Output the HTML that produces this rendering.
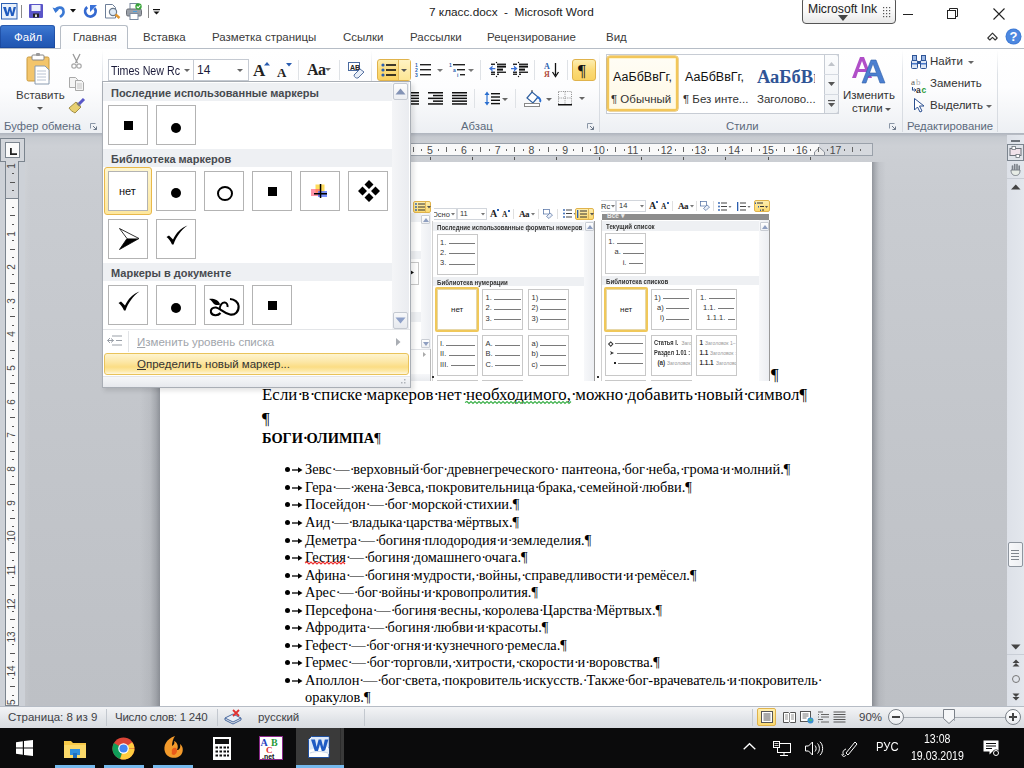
<!DOCTYPE html>
<html><head><meta charset="utf-8">
<style>
*{box-sizing:border-box;margin:0;padding:0}
html,body{width:1024px;height:768px;overflow:hidden;background:#fff;font-family:"Liberation Sans",sans-serif;font-size:12px;color:#1e1e1e}
.a{position:absolute}
.t{position:absolute;white-space:pre;line-height:1}
svg{position:absolute;overflow:visible}
</style></head><body>

<!-- ===== TITLE BAR ===== -->
<div class="a" style="left:0;top:0;width:1024px;height:48px;background:#fff"></div>
<!-- word icon -->
<svg style="left:1px;top:3px" width="17" height="17" viewBox="0 0 17 17">
<rect x="0.5" y="0.5" width="15.5" height="15.5" fill="#e8f0fb" stroke="#2b5fb3"/>
<path d="M2 4 h3 l1.3 6 l1.5-6 h2 l1.5 6 l1.3-6 h2.4 l-2.5 9 h-2.3 l-1.4-5.5 l-1.4 5.5 h-2.3z" fill="#1f5bbf"/>
</svg>
<div class="a" style="left:21px;top:5px;width:1px;height:13px;background:#8a8a8a"></div>
<!-- save -->
<svg style="left:29px;top:4px" width="15" height="15" viewBox="0 0 15 15">
<rect x="0" y="0" width="14" height="14" rx="1" fill="#5a55c8"/>
<rect x="2.5" y="1" width="9" height="6" fill="#eef1fb"/>
<rect x="4" y="9.5" width="6" height="4" fill="#222"/>
<rect x="6" y="10.5" width="2" height="2.5" fill="#ddd"/>
</svg>
<!-- undo -->
<svg style="left:52px;top:4px" width="14" height="14" viewBox="0 0 14 14">
<path d="M3.5 7 C4 3 11 2 11.5 7 C12 10 9.5 12 8 13" fill="none" stroke="#3a78d4" stroke-width="2.6"/>
<path d="M0.5 3.5 L3.5 9 L7 5.5z" fill="#3a78d4"/>
</svg>
<svg style="left:70px;top:9px" width="6" height="4" viewBox="0 0 6 4"><path d="M0 0h6l-3 3.5z" fill="#111"/></svg>
<!-- redo -->
<svg style="left:83px;top:4px" width="15" height="15" viewBox="0 0 15 15"><path d="M4.2 3.2 A5.2 5.2 0 1 0 11.5 4.2" fill="none" stroke="#3469d0" stroke-width="2.8"/><path d="M7 1 L14 1 L7 8z" fill="#3a72d8"/></svg>
<!-- print preview -->
<svg style="left:105px;top:4px" width="16" height="15" viewBox="0 0 16 15">
<path d="M0.5 0.5 h7 l3 3 v10.5 h-10z" fill="#fff" stroke="#6d7f99"/>
<circle cx="8" cy="8" r="3.6" fill="#dfeaf5" stroke="#6b7a8c" stroke-width="1.2"/>
<path d="M10.5 10.5 l4 3.5" stroke="#e0952e" stroke-width="2.4"/>
</svg>
<!-- printer -->
<svg style="left:126px;top:3px" width="17" height="17" viewBox="0 0 17 17">
<rect x="4" y="0.5" width="8" height="6" fill="#fff" stroke="#7a8aa0"/>
<rect x="0.5" y="6" width="15" height="7" rx="1.5" fill="#9aa0a8" stroke="#6c7078"/>
<rect x="4" y="10.5" width="8" height="6" fill="#fff" stroke="#7a8aa0"/>
<rect x="7" y="8" width="4" height="1" fill="#4aa0e0"/>
<circle cx="12.5" cy="3.5" r="3.2" fill="#3aa53a"/>
<path d="M10.8 3.5 l1.3 1.3 l2.2-2.4" stroke="#fff" stroke-width="1.1" fill="none"/>
</svg>
<div class="a" style="left:148px;top:5px;width:1px;height:13px;background:#8a8a8a"></div>
<svg style="left:153px;top:9px" width="8" height="6" viewBox="0 0 8 6"><rect x="0" y="0" width="7" height="1.2" fill="#111"/><path d="M0.5 2.5h6l-3 3z" fill="#111"/></svg>

<div class="t" style="left:429px;top:7px;font-size:11.8px;color:#222">7 класс.docx  -  Microsoft Word</div>

<!-- Microsoft Ink -->
<div class="a" style="left:802px;top:-3px;width:94px;height:27px;border:1px solid #555;border-radius:4px;background:linear-gradient(#fff,#fafafa 50%,#e8e8e8)"></div>
<div class="t" style="left:808px;top:3px;font-size:12.2px;color:#222">Microsoft Ink</div>
<svg style="left:838px;top:15px" width="10" height="6" viewBox="0 0 10 6"><path d="M0 0h10l-5 6z" fill="#444"/></svg>
<svg style="left:883px;top:7px" width="9" height="11" viewBox="0 0 9 11" fill="#555">
<rect x="0" y="0" width="1.2" height="1.2"/><rect x="3" y="0" width="1.2" height="1.2"/><rect x="6" y="0" width="1.2" height="1.2"/>
<rect x="0" y="3" width="1.2" height="1.2"/><rect x="3" y="3" width="1.2" height="1.2"/><rect x="6" y="3" width="1.2" height="1.2"/>
<rect x="0" y="6" width="1.2" height="1.2"/><rect x="3" y="6" width="1.2" height="1.2"/><rect x="6" y="6" width="1.2" height="1.2"/>
<rect x="0" y="9" width="1.2" height="1.2"/><rect x="3" y="9" width="1.2" height="1.2"/><rect x="6" y="9" width="1.2" height="1.2"/>
</svg>
<!-- window controls -->
<div class="a" style="left:903px;top:14px;width:10px;height:1px;background:#222"></div>
<svg style="left:947px;top:8px" width="12" height="12" viewBox="0 0 12 12"><rect x="0.5" y="2.5" width="8" height="8" fill="none" stroke="#222"/><path d="M2.5 2.5 v-2 h8 v8 h-2" fill="none" stroke="#222"/></svg>
<svg style="left:993px;top:8px" width="12" height="12" viewBox="0 0 12 12"><path d="M0.5 0.5 L11.5 11.5 M11.5 0.5 L0.5 11.5" stroke="#222" stroke-width="1.1"/></svg>

<!-- ===== TABS ===== -->
<div class="a" style="left:0;top:25px;width:55px;height:23px;background:linear-gradient(#3f7bd3,#2b63c0 50%,#1f55b0);border-radius:3px 3px 0 0;box-shadow:inset 0 0 0 1px rgba(20,60,140,0.5)"></div>
<div class="t" style="left:14px;top:32px;color:#fff;font-size:11.5px">Файл</div>
<div class="a" style="left:0;top:48px;width:1024px;height:1px;background:#b6bdc6"></div>
<div class="a" style="left:60px;top:25px;width:68px;height:24px;background:linear-gradient(#fff,#fbfcfd);border:1px solid #b6bdc6;border-bottom:none;border-radius:3px 3px 0 0"></div>
<div class="t" style="left:73px;top:32px;font-size:11.5px;color:#3b3b3b">Главная</div>
<div class="t" style="left:143px;top:32px;font-size:11.5px;color:#3b3b3b">Вставка</div>
<div class="t" style="left:212px;top:32px;font-size:11.5px;color:#3b3b3b">Разметка страницы</div>
<div class="t" style="left:343px;top:32px;font-size:11.5px;color:#3b3b3b">Ссылки</div>
<div class="t" style="left:410px;top:32px;font-size:11.5px;color:#3b3b3b">Рассылки</div>
<div class="t" style="left:487px;top:32px;font-size:11.5px;color:#3b3b3b">Рецензирование</div>
<div class="t" style="left:606px;top:32px;font-size:11.5px;color:#3b3b3b">Вид</div>
<svg style="left:987px;top:32px" width="11" height="9" viewBox="0 0 11 9"><path d="M0.8 6 L5.5 1.2 L10.2 6 L8.2 8 L5.5 5.3 L2.8 8z" fill="#fff" stroke="#333" stroke-width="1.1" stroke-linejoin="round"/></svg>
<svg style="left:1005px;top:28px" width="17" height="17" viewBox="0 0 17 17"><circle cx="8.5" cy="8.5" r="8" fill="#3f7bd6"/><circle cx="8.5" cy="8.5" r="7" fill="#4d88e0"/><text x="8.5" y="13.2" font-family="Liberation Sans" font-weight="bold" font-size="13" fill="#fff" text-anchor="middle">?</text></svg>

<!-- ===== RIBBON ===== -->
<div class="a" style="left:0;top:49px;width:1024px;height:85px;background:linear-gradient(#fff 0%,#fdfdfe 45%,#f1f3f6 85%,#eceff3 100%)"></div>
<div class="a" style="left:0;top:133px;width:1024px;height:1px;background:#b1b7c0"></div>
<!-- group separators -->
<div class="a" style="left:102px;top:50px;width:1px;height:82px;background:linear-gradient(#fff,#dde1e6 30%,#d6dae0)"></div>
<div class="a" style="left:371px;top:50px;width:1px;height:82px;background:linear-gradient(#fff,#dde1e6 30%,#d6dae0)"></div>
<div class="a" style="left:599px;top:50px;width:1px;height:82px;background:linear-gradient(#fff,#dde1e6 30%,#d6dae0)"></div>
<div class="a" style="left:902px;top:50px;width:1px;height:82px;background:linear-gradient(#fff,#dde1e6 30%,#d6dae0)"></div>
<div class="a" style="left:997px;top:50px;width:1px;height:82px;background:linear-gradient(#fff,#dde1e6 30%,#d6dae0)"></div>
<!-- group labels -->
<div class="t" style="left:4px;top:121px;font-size:11.3px;color:#5c6a7c">Буфер обмена</div>
<svg style="left:90px;top:123px" width="7" height="7" viewBox="0 0 7 7"><path d="M0.5 0.5h5" stroke="#8a96a6"/><path d="M0.5 0.5v5" stroke="#8a96a6"/><path d="M3 3l3.5 3.5M6.5 3.5v3h-3" stroke="#6b7788" fill="none"/></svg>
<div class="t" style="left:461px;top:121px;font-size:11.3px;color:#5c6a7c">Абзац</div>
<svg style="left:587px;top:123px" width="7" height="7" viewBox="0 0 7 7"><path d="M0.5 0.5h5" stroke="#8a96a6"/><path d="M0.5 0.5v5" stroke="#8a96a6"/><path d="M3 3l3.5 3.5M6.5 3.5v3h-3" stroke="#6b7788" fill="none"/></svg>
<div class="t" style="left:726px;top:121px;font-size:11.3px;color:#5c6a7c">Стили</div>
<svg style="left:889px;top:123px" width="7" height="7" viewBox="0 0 7 7"><path d="M0.5 0.5h5" stroke="#8a96a6"/><path d="M0.5 0.5v5" stroke="#8a96a6"/><path d="M3 3l3.5 3.5M6.5 3.5v3h-3" stroke="#6b7788" fill="none"/></svg>
<div class="t" style="left:907px;top:121px;font-size:11.3px;color:#5c6a7c">Редактирование</div>

<!-- clipboard -->
<svg style="left:26px;top:53px" width="28" height="32" viewBox="0 0 28 32">
<rect x="1" y="4" width="22" height="24" rx="1.5" fill="#f3c56b" stroke="#c99a3f"/>
<rect x="6" y="2" width="12" height="5" rx="1" fill="#fff" stroke="#888"/>
<rect x="10" y="0" width="4" height="3" rx="1" fill="#999"/>
<path d="M9 13 h10 l4 4 v14 h-14z" fill="#fff" stroke="#8a9bb0"/>
<path d="M11 18h9M11 21h9M11 24h9M11 27h9" stroke="#b9c4d3"/>
</svg>
<div class="t" style="left:16px;top:90px;font-size:11.5px;color:#3b3b3b">Вставить</div>
<svg style="left:37px;top:107px" width="6" height="4" viewBox="0 0 6 4"><path d="M0 0h6l-3 3z" fill="#555"/></svg>
<svg style="left:71px;top:54px" width="11" height="15" viewBox="0 0 11 15"><path d="M2 0 L6.5 9 M9 0 L4.5 9" stroke="#9a9a9a" stroke-width="1.3"/><circle cx="3" cy="12" r="2.2" fill="none" stroke="#a8a8a8" stroke-width="1.2"/><circle cx="8" cy="12" r="2.2" fill="none" stroke="#a8a8a8" stroke-width="1.2"/></svg>
<svg style="left:69px;top:77px" width="16" height="14" viewBox="0 0 16 14"><path d="M0.5 0.5h6l2 2v8h-8z" fill="#f4f4f4" stroke="#a9a9a9"/><path d="M6.5 3.5h6l2 2v8h-8z" fill="#f4f4f4" stroke="#a9a9a9"/><path d="M8 7h5M8 9h5M8 11h5" stroke="#c4c4c4"/></svg>
<svg style="left:69px;top:98px" width="17" height="16" viewBox="0 0 17 16"><path d="M10 6 L15 1" stroke="#5856c8" stroke-width="3"/><path d="M7 4 L12 9 L6 15 C4 14 1 12 0 10z" fill="#e8d070" stroke="#8e7a30" stroke-width="0.8"/><path d="M8 5 l3 3" stroke="#777" stroke-width="2"/></svg>

<!-- font group top row -->
<div class="a" style="left:108px;top:59px;width:86px;height:22px;background:#fff;border:1px solid #c5cad2"></div>
<div class="a" style="left:110px;top:60px;width:70px;height:20px;overflow:hidden"><div class="t" style="left:1px;top:4.5px;font-size:12px;color:#1b1b3a;transform:scaleX(0.89);transform-origin:0 0">Times New Rc</div></div>
<svg style="left:184px;top:69px" width="6" height="4" viewBox="0 0 6 4"><path d="M0 0h6l-3 3z" fill="#666"/></svg>
<div class="a" style="left:193px;top:59px;width:56px;height:22px;background:#fff;border:1px solid #c5cad2"></div>
<div class="t" style="left:197px;top:64px;font-size:12px;color:#1b1b3a">14</div>
<svg style="left:237px;top:69px" width="6" height="4" viewBox="0 0 6 4"><path d="M0 0h6l-3 3z" fill="#666"/></svg>
<div class="t" style="left:253px;top:62px;font-family:'Liberation Serif';font-weight:bold;font-size:17px;color:#222">A</div>
<svg style="left:264px;top:62px" width="6" height="4" viewBox="0 0 6 4"><path d="M0 3.5h6l-3-3.5z" fill="#2a5db0"/></svg>
<div class="t" style="left:277px;top:66px;font-family:'Liberation Serif';font-weight:bold;font-size:13px;color:#222">A</div>
<svg style="left:286px;top:63px" width="6" height="4" viewBox="0 0 6 4"><path d="M0 0h6l-3 3.5z" fill="#2a5db0"/></svg>
<div class="a" style="left:298px;top:60px;width:1px;height:20px;background:#dfe2e6"></div>
<div class="t" style="left:307px;top:62px;font-family:'Liberation Serif';font-weight:bold;font-size:16px;color:#222;letter-spacing:-0.5px">Aa</div>
<svg style="left:325px;top:68px" width="6" height="4" viewBox="0 0 6 4"><path d="M0 0h6l-3 3z" fill="#666"/></svg>
<div class="a" style="left:339px;top:60px;width:1px;height:20px;background:#dfe2e6"></div>
<svg style="left:348px;top:62px" width="17" height="17" viewBox="0 0 17 17"><rect x="0.5" y="0.5" width="11" height="8" fill="#fff" stroke="#4a6aa0"/><text x="2" y="7.5" font-family="Liberation Sans" font-weight="bold" font-size="7" fill="#222">AB</text><path d="M6 13 L12 7 L16 10 L10 16 C8 16.5 6 15 6 13z" fill="#e8eef8" stroke="#5570a0"/></svg>

<!-- paragraph group -->
<div class="a" style="left:377px;top:59px;width:34px;height:22px;border:1px solid #e0b34c;border-radius:3px;background:linear-gradient(#fdeeb0,#fbdb79 50%,#f9d262)"></div>
<div class="a" style="left:398px;top:60px;width:12px;height:20px;border-left:1px solid #e3b95a;background:linear-gradient(#fff3c3,#fde695)"></div>
<svg style="left:381px;top:63px" width="16" height="14" viewBox="0 0 16 14"><circle cx="2" cy="2" r="1.6" fill="#2b5fb0"/><circle cx="2" cy="7" r="1.6" fill="#2b5fb0"/><circle cx="2" cy="12" r="1.6" fill="#2b5fb0"/><rect x="5" y="1.2" width="10" height="1.6" fill="#111"/><rect x="5" y="6.2" width="10" height="1.6" fill="#111"/><rect x="5" y="11.2" width="10" height="1.6" fill="#111"/></svg>
<svg style="left:401px;top:69px" width="6" height="4" viewBox="0 0 6 4"><path d="M0 0h6l-3 3z" fill="#555"/></svg>
<!-- numbered -->
<svg style="left:415px;top:62px" width="17" height="15" viewBox="0 0 17 15"><text x="0" y="4.5" font-size="5" font-weight="bold" fill="#2b5fb0" font-family="Liberation Sans">1</text><text x="0" y="9.5" font-size="5" font-weight="bold" fill="#2b5fb0" font-family="Liberation Sans">2</text><text x="0" y="14.5" font-size="5" font-weight="bold" fill="#2b5fb0" font-family="Liberation Sans">3</text><rect x="5" y="2" width="11" height="1.4" fill="#222"/><rect x="5" y="7" width="11" height="1.4" fill="#222"/><rect x="5" y="12" width="11" height="1.4" fill="#222"/></svg>
<svg style="left:437px;top:69px" width="6" height="4" viewBox="0 0 6 4"><path d="M0 0h6l-3 3z" fill="#777"/></svg>
<svg style="left:449px;top:62px" width="17" height="15" viewBox="0 0 17 15"><text x="0" y="4.5" font-size="5" font-weight="bold" fill="#2b5fb0" font-family="Liberation Sans">1</text><text x="4" y="9.5" font-size="5" font-weight="bold" fill="#2b5fb0" font-family="Liberation Sans">a</text><text x="8" y="14.5" font-size="5" font-weight="bold" fill="#2b5fb0" font-family="Liberation Sans">i</text><rect x="4" y="2" width="12" height="1.4" fill="#222"/><rect x="8" y="7" width="8" height="1.4" fill="#222"/><rect x="11" y="12" width="5" height="1.4" fill="#222"/></svg>
<svg style="left:468px;top:69px" width="6" height="4" viewBox="0 0 6 4"><path d="M0 0h6l-3 3z" fill="#777"/></svg>
<div class="a" style="left:480px;top:60px;width:1px;height:20px;background:#dfe2e6"></div>
<svg style="left:489px;top:61px" width="18" height="17" viewBox="0 0 18 17"><circle cx="7.5" cy="1.5" r="0.7" fill="#111"/><circle cx="7.5" cy="15.5" r="0.7" fill="#111"/><rect x="2" y="2.6" width="4" height="1.3" fill="#111"/><rect x="2" y="10.6" width="4" height="1.3" fill="#111"/><rect x="2" y="12.6" width="4" height="1.3" fill="#111"/><rect x="8" y="2.6" width="9" height="1.3" fill="#111"/><rect x="8" y="4.6" width="9" height="2" fill="#111"/><rect x="8" y="7.6" width="6" height="2" fill="#111"/><rect x="8" y="10.6" width="9" height="1.3" fill="#111"/><rect x="8" y="12.6" width="2" height="1.3" fill="#111"/><path d="M0 7.6 L4 4.3 L3.2 7 H6.3 V8.2 H3.2 L4 10.9z" fill="#3a70d4"/></svg>
<svg style="left:511px;top:61px" width="18" height="17" viewBox="0 0 18 17"><circle cx="7.5" cy="1.5" r="0.7" fill="#111"/><circle cx="7.5" cy="15.5" r="0.7" fill="#111"/><rect x="2" y="2.6" width="4" height="1.3" fill="#111"/><rect x="2" y="10.6" width="4" height="1.3" fill="#111"/><rect x="2" y="12.6" width="4" height="1.3" fill="#111"/><rect x="8" y="2.6" width="9" height="1.3" fill="#111"/><rect x="8" y="4.6" width="9" height="2" fill="#111"/><rect x="8" y="7.6" width="6" height="2" fill="#111"/><rect x="8" y="10.6" width="9" height="1.3" fill="#111"/><rect x="8" y="12.6" width="2" height="1.3" fill="#111"/><path d="M6.5 7.6 L2.5 4.3 L3.3 7 H0 V8.2 H3.3 L2.5 10.9z" fill="#3a70d4"/></svg>
<div class="a" style="left:534px;top:60px;width:1px;height:20px;background:#dfe2e6"></div>
<svg style="left:544px;top:62px" width="15" height="16" viewBox="0 0 15 16"><text x="0" y="7" font-size="8" font-weight="bold" fill="#2b5fb0" font-family="Liberation Serif">A</text><text x="0" y="15" font-size="8" font-weight="bold" fill="#b04a3a" font-family="Liberation Serif">Я</text><path d="M11.5 1 v12" stroke="#111" stroke-width="1.3"/><path d="M8.5 10 L11.5 14.5 L14.5 10" fill="none" stroke="#111" stroke-width="1.3"/></svg>
<div class="a" style="left:567px;top:60px;width:1px;height:20px;background:#dfe2e6"></div>
<div class="a" style="left:572px;top:59px;width:24px;height:22px;border:1px solid #e0b34c;border-radius:3px;background:linear-gradient(#fdeeb0,#fbdb79 50%,#f9d262)"></div>
<div class="t" style="left:578px;top:62px;font-family:'Liberation Serif';font-size:17px;color:#111">¶</div>
<!-- row2 -->
<svg style="left:405px;top:92px" width="15" height="13" viewBox="0 0 15 13"><rect x="2" y="0.0" width="12" height="1.5" fill="#111"/><rect x="2" y="2.8" width="12" height="1.5" fill="#111"/><rect x="2" y="5.6" width="12" height="1.5" fill="#111"/><rect x="2" y="8.399999999999999" width="12" height="1.5" fill="#111"/><rect x="2" y="11.2" width="12" height="1.5" fill="#111"/></svg>
<svg style="left:428px;top:92px" width="15" height="13" viewBox="0 0 15 13"><rect x="0" y="0" width="15" height="1.5" fill="#111"/><rect x="5" y="2.8" width="10" height="1.5" fill="#111"/><rect x="0" y="5.6" width="15" height="1.5" fill="#111"/><rect x="5" y="8.4" width="10" height="1.5" fill="#111"/><rect x="0" y="11.2" width="15" height="1.5" fill="#111"/></svg>
<svg style="left:452px;top:92px" width="15" height="13" viewBox="0 0 15 13"><rect x="0" y="0.0" width="15" height="1.5" fill="#111"/><rect x="0" y="2.8" width="15" height="1.5" fill="#111"/><rect x="0" y="5.6" width="15" height="1.5" fill="#111"/><rect x="0" y="8.399999999999999" width="15" height="1.5" fill="#111"/><rect x="0" y="11.2" width="15" height="1.5" fill="#111"/></svg>
<div class="a" style="left:474px;top:89px;width:1px;height:19px;background:#dfe2e6"></div>
<svg style="left:484px;top:91px" width="24" height="15" viewBox="0 0 24 15"><path d="M3 0.5 L0.5 4 h5z M3 14.5 L0.5 11 h5z" fill="#2b6fd0"/><rect x="2.4" y="3" width="1.2" height="9" fill="#2b6fd0"/><rect x="7" y="2.0" width="9" height="1.4" fill="#111"/><rect x="7" y="5.3" width="9" height="1.4" fill="#111"/><rect x="7" y="8.6" width="9" height="1.4" fill="#111"/><rect x="7" y="11.899999999999999" width="9" height="1.4" fill="#111"/><path d="M18 7h6l-3 3z" fill="#666"/></svg>
<div class="a" style="left:515px;top:89px;width:1px;height:19px;background:#dfe2e6"></div>
<svg style="left:524px;top:90px" width="28" height="17" viewBox="0 0 28 17"><path d="M3 8 L8 2 L14 7 L9 13z" fill="#fff" stroke="#2f5f9f" stroke-width="1.2"/><path d="M8 2 V0" stroke="#333"/><path d="M13 7 C16 8 17 10 16 12" stroke="#2b6fd0" stroke-width="2" fill="none"/><rect x="0.5" y="13.5" width="15" height="3" fill="#fff" stroke="#888"/><path d="M22 8h6l-3 3z" fill="#666"/></svg>
<svg style="left:558px;top:91px" width="28" height="15" viewBox="0 0 28 15"><path d="M0.5 0.5h13v13h-13zM7 0.5v13M0.5 7h13" fill="none" stroke="#8a8a8a" stroke-width="1" stroke-dasharray="1,1.2"/><rect x="0" y="13" width="14" height="1.5" fill="#111"/><path d="M21 6h6l-3 3z" fill="#666"/></svg>

<!-- styles group -->
<div class="a" style="left:606px;top:54px;width:233px;height:60px;background:#fff;border:1px solid #c7ccd4"></div>
<div class="a" style="left:607px;top:56px;width:71px;height:55px;border:2px solid #f2c65a;border-radius:3px;box-shadow:inset 0 0 0 1px #fff3c9, 0 0 0 0.5px #d9a93a;background:linear-gradient(#fffdf5,#fff9e6)"></div>
<div class="t" style="left:613px;top:70.5px;font-size:12.5px;color:#111">АаБбВвГг,</div>
<div class="t" style="left:611px;top:93.5px;font-size:11.5px;color:#333">¶ Обычный</div>
<div class="t" style="left:685px;top:70.5px;font-size:12.5px;color:#111">АаБбВвГг,</div>
<div class="t" style="left:683px;top:93.5px;font-size:11.5px;color:#333">¶ Без инте...</div>
<div class="a" style="left:755px;top:62px;width:60px;height:26px;overflow:hidden"><div class="t" style="left:2px;top:5.5px;font-family:'Liberation Serif';font-weight:bold;font-size:18.5px;color:#2f5496">АаБбВв</div></div>
<div class="t" style="left:757px;top:93.5px;font-size:11.5px;color:#333">Заголово...</div>
<div class="a" style="left:824px;top:54px;width:15px;height:60px;background:linear-gradient(#fbfcfd,#eef1f4);border:1px solid #c7ccd4;border-radius:0 3px 3px 0"></div>
<div class="a" style="left:824px;top:74px;width:15px;height:1px;background:#d5dae1"></div>
<div class="a" style="left:824px;top:94px;width:15px;height:1px;background:#d5dae1"></div>
<svg style="left:828px;top:62px" width="7" height="4" viewBox="0 0 7 4"><path d="M0 4h7l-3.5-4z" fill="#c0c4ca"/></svg>
<svg style="left:828px;top:82px" width="7" height="4" viewBox="0 0 7 4"><path d="M0 0h7l-3.5 4z" fill="#555"/></svg>
<svg style="left:828px;top:100px" width="7" height="7" viewBox="0 0 7 7"><rect x="0" y="0" width="7" height="1.2" fill="#555"/><path d="M0 3h7l-3.5 4z" fill="#555"/></svg>
<!-- change styles -->
<svg style="left:852px;top:56px" width="34" height="28" viewBox="0 0 34 28"><path d="M0 22 L8 1 L12 1 L20 22 h-4 l-2-6 h-8 l-2 6z M7 13 h6 l-3-8z" fill="#b04fc8"/><path d="M10 27 L19 4 L24 4 L33 27 h-5 l-2.5-7 h-9 l-2.5 7z M17.5 17 h7 l-3.5-9.5z" fill="#4b7fd0" stroke="#2f5fa8" stroke-width="0.6"/></svg>
<div class="t" style="left:843px;top:90px;font-size:11.5px;color:#333">Изменить</div>
<div class="t" style="left:852px;top:103px;font-size:11.5px;color:#333">стили</div>
<svg style="left:885px;top:108px" width="6" height="4" viewBox="0 0 6 4"><path d="M0 0h6l-3 3z" fill="#555"/></svg>

<!-- editing group -->
<svg style="left:911px;top:54px" width="16" height="15" viewBox="0 0 16 15"><rect x="0.5" y="6.5" width="6" height="8" rx="1" fill="#dfe8f6" stroke="#2f5597"/><rect x="9.5" y="6.5" width="6" height="8" rx="1" fill="#dfe8f6" stroke="#2f5597"/><rect x="1.5" y="1.5" width="4" height="5" fill="#9db9e6" stroke="#2f5597"/><rect x="10.5" y="1.5" width="4" height="5" fill="#9db9e6" stroke="#2f5597"/><rect x="6" y="7" width="4" height="3" fill="#2f5597"/><rect x="1" y="9" width="5" height="1.5" fill="#4a78c8"/><rect x="10" y="9" width="5" height="1.5" fill="#4a78c8"/></svg>
<div class="t" style="left:930px;top:56px;font-size:11.5px;color:#333">Найти</div>
<svg style="left:968px;top:61px" width="6" height="4" viewBox="0 0 6 4"><path d="M0 0h6l-3 3z" fill="#666"/></svg>
<svg style="left:911px;top:78px" width="18" height="15" viewBox="0 0 18 15"><text x="0" y="7" font-family="Liberation Serif" font-size="9" fill="#555">a</text><text x="5" y="7" font-family="Liberation Serif" font-size="9" fill="#aaa">b</text><text x="5" y="14.5" font-family="Liberation Sans" font-weight="bold" font-size="8.5" fill="#333">a</text><text x="10.5" y="14.5" font-family="Liberation Sans" font-weight="bold" font-size="8.5" fill="#2a9a3a">c</text><path d="M1.5 9 v3 h2.5" stroke="#2b4f90" stroke-width="1.1" fill="none"/><path d="M3.5 10.5 l1.5 1.5 l-1.5 1.5" stroke="#2b4f90" stroke-width="1" fill="none"/></svg>
<div class="t" style="left:930px;top:78px;font-size:11.5px;color:#333">Заменить</div>
<svg style="left:914px;top:98px" width="11" height="15" viewBox="0 0 11 15"><path d="M0.5 0.5 L0.5 12 L3.5 9 L6 14 L8 13 L5.5 8 L10 8z" fill="#fff" stroke="#2b4f90"/></svg>
<div class="t" style="left:930px;top:100px;font-size:11.5px;color:#333">Выделить</div>
<svg style="left:986px;top:105px" width="6" height="4" viewBox="0 0 6 4"><path d="M0 0h6l-3 3z" fill="#666"/></svg>

<!-- ===== RULER BAR / DOC BG ===== -->
<div class="a" style="left:0;top:134px;width:1024px;height:572px;background:linear-gradient(#cdd0d5 0px,#c9ccd1 60px,#c3c6cb 300px,#bdc0c5 572px)"></div>
<div class="a" style="left:0;top:134px;width:1024px;height:28px;background:linear-gradient(#b4b9c1 0px,#c6cad0 3px,#cdd0d5 12px,#cbced3 100%)"></div>
<div class="a" style="left:0;top:162px;width:25px;height:544px;background:#cdd1d7"></div>
<div class="a" style="left:25px;top:162px;width:135px;height:544px;background:linear-gradient(90deg,rgba(255,255,255,0.08) 0px,rgba(0,0,0,0) 6px,rgba(0,0,0,0) 115px,rgba(40,45,55,0.06) 125px,rgba(40,45,55,0.2) 131px,rgba(40,45,55,0.35) 135px)"></div>
<div class="a" style="left:872px;top:162px;width:135px;height:544px;background:linear-gradient(90deg,rgba(40,45,55,0.35) 0px,rgba(40,45,55,0.2) 3px,rgba(40,45,55,0.06) 7px,rgba(0,0,0,0) 14px)"></div>
<!-- horizontal ruler -->
<div class="a" style="left:160px;top:143px;width:713px;height:13px;background:#d6d9de;border:1px solid #9aa1aa"></div>
<div class="a" style="left:261px;top:144px;width:558px;height:11px;background:#f9f9f9"></div>
<svg style="left:814px;top:147px" width="11" height="9" viewBox="0 0 11 9"><path d="M0.5 8.5 V5 L5.5 0.5 L10.5 5 V8.5z" fill="#ececec" stroke="#8a9099"/></svg>
<div class="a" style="left:412.6px;top:147px;width:1px;height:5px;background:#666"></div>
<div class="a" style="left:421.0px;top:149px;width:1px;height:1.5px;background:#666"></div>
<div class="t" style="left:420.0px;width:20px;text-align:center;top:145px;font-size:10.5px;color:#4a4a4a">5</div>
<div class="a" style="left:437.9px;top:149px;width:1px;height:1.5px;background:#666"></div>
<div class="a" style="left:446.4px;top:147px;width:1px;height:5px;background:#666"></div>
<div class="a" style="left:454.9px;top:149px;width:1px;height:1.5px;background:#666"></div>
<div class="t" style="left:453.8px;width:20px;text-align:center;top:145px;font-size:10.5px;color:#4a4a4a">6</div>
<div class="a" style="left:471.8px;top:149px;width:1px;height:1.5px;background:#666"></div>
<div class="a" style="left:480.2px;top:147px;width:1px;height:5px;background:#666"></div>
<div class="a" style="left:488.6px;top:149px;width:1px;height:1.5px;background:#666"></div>
<div class="t" style="left:487.6px;width:20px;text-align:center;top:145px;font-size:10.5px;color:#4a4a4a">7</div>
<div class="a" style="left:505.5px;top:149px;width:1px;height:1.5px;background:#666"></div>
<div class="a" style="left:514.0px;top:147px;width:1px;height:5px;background:#666"></div>
<div class="a" style="left:522.5px;top:149px;width:1px;height:1.5px;background:#666"></div>
<div class="t" style="left:521.4px;width:20px;text-align:center;top:145px;font-size:10.5px;color:#4a4a4a">8</div>
<div class="a" style="left:539.3px;top:149px;width:1px;height:1.5px;background:#666"></div>
<div class="a" style="left:547.8px;top:147px;width:1px;height:5px;background:#666"></div>
<div class="a" style="left:556.2px;top:149px;width:1px;height:1.5px;background:#666"></div>
<div class="t" style="left:555.2px;width:20px;text-align:center;top:145px;font-size:10.5px;color:#4a4a4a">9</div>
<div class="a" style="left:573.1px;top:149px;width:1px;height:1.5px;background:#666"></div>
<div class="a" style="left:581.6px;top:147px;width:1px;height:5px;background:#666"></div>
<div class="a" style="left:590.0px;top:149px;width:1px;height:1.5px;background:#666"></div>
<div class="t" style="left:589.0px;width:20px;text-align:center;top:145px;font-size:10.5px;color:#4a4a4a">10</div>
<div class="a" style="left:607.0px;top:149px;width:1px;height:1.5px;background:#666"></div>
<div class="a" style="left:615.4px;top:147px;width:1px;height:5px;background:#666"></div>
<div class="a" style="left:623.8px;top:149px;width:1px;height:1.5px;background:#666"></div>
<div class="t" style="left:622.8px;width:20px;text-align:center;top:145px;font-size:10.5px;color:#4a4a4a">11</div>
<div class="a" style="left:640.8px;top:149px;width:1px;height:1.5px;background:#666"></div>
<div class="a" style="left:649.2px;top:147px;width:1px;height:5px;background:#666"></div>
<div class="a" style="left:657.6px;top:149px;width:1px;height:1.5px;background:#666"></div>
<div class="t" style="left:656.6px;width:20px;text-align:center;top:145px;font-size:10.5px;color:#4a4a4a">12</div>
<div class="a" style="left:674.5px;top:149px;width:1px;height:1.5px;background:#666"></div>
<div class="a" style="left:683.0px;top:147px;width:1px;height:5px;background:#666"></div>
<div class="a" style="left:691.5px;top:149px;width:1px;height:1.5px;background:#666"></div>
<div class="t" style="left:690.4px;width:20px;text-align:center;top:145px;font-size:10.5px;color:#4a4a4a">13</div>
<div class="a" style="left:708.3px;top:149px;width:1px;height:1.5px;background:#666"></div>
<div class="a" style="left:716.8px;top:147px;width:1px;height:5px;background:#666"></div>
<div class="a" style="left:725.2px;top:149px;width:1px;height:1.5px;background:#666"></div>
<div class="t" style="left:724.2px;width:20px;text-align:center;top:145px;font-size:10.5px;color:#4a4a4a">14</div>
<div class="a" style="left:742.1px;top:149px;width:1px;height:1.5px;background:#666"></div>
<div class="a" style="left:750.6px;top:147px;width:1px;height:5px;background:#666"></div>
<div class="a" style="left:759.0px;top:149px;width:1px;height:1.5px;background:#666"></div>
<div class="t" style="left:758.0px;width:20px;text-align:center;top:145px;font-size:10.5px;color:#4a4a4a">15</div>
<div class="a" style="left:775.9px;top:149px;width:1px;height:1.5px;background:#666"></div>
<div class="a" style="left:784.4px;top:147px;width:1px;height:5px;background:#666"></div>
<div class="a" style="left:792.8px;top:149px;width:1px;height:1.5px;background:#666"></div>
<div class="t" style="left:791.8px;width:20px;text-align:center;top:145px;font-size:10.5px;color:#4a4a4a">16</div>
<div class="a" style="left:809.8px;top:149px;width:1px;height:1.5px;background:#666"></div>
<div class="a" style="left:818.2px;top:147px;width:1px;height:5px;background:#666"></div>
<div class="a" style="left:826.6px;top:149px;width:1px;height:1.5px;background:#666"></div>
<div class="t" style="left:825.6px;width:20px;text-align:center;top:145px;font-size:10.5px;color:#4a4a4a">17</div>
<div class="a" style="left:843.5px;top:149px;width:1px;height:1.5px;background:#666"></div>
<div class="a" style="left:852.0px;top:147px;width:1px;height:5px;background:#666"></div>
<div class="a" style="left:860.4px;top:149px;width:1px;height:1.5px;background:#666"></div>
<div class="a" style="left:429.5px;top:157px;width:1px;height:3px;background:#555"></div>
<div class="a" style="left:471.8px;top:157px;width:1px;height:3px;background:#555"></div>
<div class="a" style="left:514.0px;top:157px;width:1px;height:3px;background:#555"></div>
<div class="a" style="left:556.2px;top:157px;width:1px;height:3px;background:#555"></div>
<div class="a" style="left:598.5px;top:157px;width:1px;height:3px;background:#555"></div>
<div class="a" style="left:640.8px;top:157px;width:1px;height:3px;background:#555"></div>
<div class="a" style="left:683.0px;top:157px;width:1px;height:3px;background:#555"></div>
<div class="a" style="left:725.2px;top:157px;width:1px;height:3px;background:#555"></div>
<div class="a" style="left:767.5px;top:157px;width:1px;height:3px;background:#555"></div>
<div class="a" style="left:809.8px;top:157px;width:1px;height:3px;background:#555"></div>
<!-- tab selector -->
<div class="a" style="left:0;top:138px;width:25px;height:24px;background:#d3d6db;border:1px solid #7b848e"></div>
<div class="a" style="left:5px;top:142px;width:15px;height:16px;background:#fafafa;border:1px solid #7b848e"></div>
<svg style="left:10px;top:148px" width="7" height="7" viewBox="0 0 7 7"><path d="M0 0h1.8v5.2h5.2v1.8h-7z" fill="#222"/></svg>
<!-- vertical ruler -->
<div class="a" style="left:5px;top:161px;width:14px;height:545px;background:#f9f9f9;border:1px solid #7b848e;border-top:none"></div>
<div class="a" style="left:6px;top:161px;width:12px;height:38px;background:#d3d6db;border-bottom:1px solid #7b848e"></div>
<div class="t" style="left:3px;top:161.2px;width:18px;height:10px;text-align:center;font-size:10px;color:#4a4a4a;transform:rotate(-90deg)">1</div>
<div class="a" style="left:11.5px;top:173.1px;width:2px;height:1px;background:#555"></div>
<div class="a" style="left:10px;top:181.5px;width:5px;height:1px;background:#555"></div>
<div class="a" style="left:11.5px;top:189.9px;width:2px;height:1px;background:#555"></div>
<div class="a" style="left:11.5px;top:206.8px;width:2px;height:1px;background:#555"></div>
<div class="a" style="left:10px;top:215.2px;width:5px;height:1px;background:#555"></div>
<div class="a" style="left:11.5px;top:223.6px;width:2px;height:1px;background:#555"></div>
<div class="t" style="left:3px;top:228.5px;width:18px;height:10px;text-align:center;font-size:10px;color:#4a4a4a;transform:rotate(-90deg)">1</div>
<div class="a" style="left:11.5px;top:240.4px;width:2px;height:1px;background:#555"></div>
<div class="a" style="left:10px;top:248.8px;width:5px;height:1px;background:#555"></div>
<div class="a" style="left:11.5px;top:257.2px;width:2px;height:1px;background:#555"></div>
<div class="t" style="left:3px;top:262.1px;width:18px;height:10px;text-align:center;font-size:10px;color:#4a4a4a;transform:rotate(-90deg)">2</div>
<div class="a" style="left:11.5px;top:274.1px;width:2px;height:1px;background:#555"></div>
<div class="a" style="left:10px;top:282.5px;width:5px;height:1px;background:#555"></div>
<div class="a" style="left:11.5px;top:290.9px;width:2px;height:1px;background:#555"></div>
<div class="t" style="left:3px;top:295.8px;width:18px;height:10px;text-align:center;font-size:10px;color:#4a4a4a;transform:rotate(-90deg)">3</div>
<div class="a" style="left:11.5px;top:307.7px;width:2px;height:1px;background:#555"></div>
<div class="a" style="left:10px;top:316.1px;width:5px;height:1px;background:#555"></div>
<div class="a" style="left:11.5px;top:324.5px;width:2px;height:1px;background:#555"></div>
<div class="t" style="left:3px;top:329.4px;width:18px;height:10px;text-align:center;font-size:10px;color:#4a4a4a;transform:rotate(-90deg)">4</div>
<div class="a" style="left:11.5px;top:341.4px;width:2px;height:1px;background:#555"></div>
<div class="a" style="left:10px;top:349.8px;width:5px;height:1px;background:#555"></div>
<div class="a" style="left:11.5px;top:358.2px;width:2px;height:1px;background:#555"></div>
<div class="t" style="left:3px;top:363.1px;width:18px;height:10px;text-align:center;font-size:10px;color:#4a4a4a;transform:rotate(-90deg)">5</div>
<div class="a" style="left:11.5px;top:375.0px;width:2px;height:1px;background:#555"></div>
<div class="a" style="left:10px;top:383.4px;width:5px;height:1px;background:#555"></div>
<div class="a" style="left:11.5px;top:391.8px;width:2px;height:1px;background:#555"></div>
<div class="t" style="left:3px;top:396.7px;width:18px;height:10px;text-align:center;font-size:10px;color:#4a4a4a;transform:rotate(-90deg)">6</div>
<div class="a" style="left:11.5px;top:408.7px;width:2px;height:1px;background:#555"></div>
<div class="a" style="left:10px;top:417.1px;width:5px;height:1px;background:#555"></div>
<div class="a" style="left:11.5px;top:425.5px;width:2px;height:1px;background:#555"></div>
<div class="t" style="left:3px;top:430.4px;width:18px;height:10px;text-align:center;font-size:10px;color:#4a4a4a;transform:rotate(-90deg)">7</div>
<div class="a" style="left:11.5px;top:442.3px;width:2px;height:1px;background:#555"></div>
<div class="a" style="left:10px;top:450.7px;width:5px;height:1px;background:#555"></div>
<div class="a" style="left:11.5px;top:459.1px;width:2px;height:1px;background:#555"></div>
<div class="t" style="left:3px;top:464.0px;width:18px;height:10px;text-align:center;font-size:10px;color:#4a4a4a;transform:rotate(-90deg)">8</div>
<div class="a" style="left:11.5px;top:476.0px;width:2px;height:1px;background:#555"></div>
<div class="a" style="left:10px;top:484.4px;width:5px;height:1px;background:#555"></div>
<div class="a" style="left:11.5px;top:492.8px;width:2px;height:1px;background:#555"></div>
<div class="t" style="left:3px;top:497.7px;width:18px;height:10px;text-align:center;font-size:10px;color:#4a4a4a;transform:rotate(-90deg)">9</div>
<div class="a" style="left:11.5px;top:509.6px;width:2px;height:1px;background:#555"></div>
<div class="a" style="left:10px;top:518.0px;width:5px;height:1px;background:#555"></div>
<div class="a" style="left:11.5px;top:526.4px;width:2px;height:1px;background:#555"></div>
<div class="t" style="left:3px;top:531.4px;width:18px;height:10px;text-align:center;font-size:10px;color:#4a4a4a;transform:rotate(-90deg)">10</div>
<div class="a" style="left:11.5px;top:543.3px;width:2px;height:1px;background:#555"></div>
<div class="a" style="left:10px;top:551.7px;width:5px;height:1px;background:#555"></div>
<div class="a" style="left:11.5px;top:560.1px;width:2px;height:1px;background:#555"></div>
<div class="t" style="left:3px;top:565.0px;width:18px;height:10px;text-align:center;font-size:10px;color:#4a4a4a;transform:rotate(-90deg)">11</div>
<div class="a" style="left:11.5px;top:576.9px;width:2px;height:1px;background:#555"></div>
<div class="a" style="left:10px;top:585.3px;width:5px;height:1px;background:#555"></div>
<div class="a" style="left:11.5px;top:593.7px;width:2px;height:1px;background:#555"></div>
<div class="t" style="left:3px;top:598.6px;width:18px;height:10px;text-align:center;font-size:10px;color:#4a4a4a;transform:rotate(-90deg)">12</div>
<div class="a" style="left:11.5px;top:610.6px;width:2px;height:1px;background:#555"></div>
<div class="a" style="left:10px;top:619.0px;width:5px;height:1px;background:#555"></div>
<div class="a" style="left:11.5px;top:627.4px;width:2px;height:1px;background:#555"></div>
<div class="t" style="left:3px;top:632.3px;width:18px;height:10px;text-align:center;font-size:10px;color:#4a4a4a;transform:rotate(-90deg)">13</div>
<div class="a" style="left:11.5px;top:644.2px;width:2px;height:1px;background:#555"></div>
<div class="a" style="left:10px;top:652.6px;width:5px;height:1px;background:#555"></div>
<div class="a" style="left:11.5px;top:661.0px;width:2px;height:1px;background:#555"></div>
<div class="t" style="left:3px;top:665.9px;width:18px;height:10px;text-align:center;font-size:10px;color:#4a4a4a;transform:rotate(-90deg)">14</div>
<div class="a" style="left:11.5px;top:677.9px;width:2px;height:1px;background:#555"></div>
<div class="a" style="left:10px;top:686.3px;width:5px;height:1px;background:#555"></div>
<div class="a" style="left:11.5px;top:694.7px;width:2px;height:1px;background:#555"></div>
<div class="t" style="left:3px;top:699.6px;width:18px;height:10px;text-align:center;font-size:10px;color:#4a4a4a;transform:rotate(-90deg)">15</div>

<!-- page -->
<div class="a" style="left:160px;top:162px;width:712px;height:544px;background:#fff"></div>

<!-- embedded image panels -->
<div class="a" style="left:405px;top:213px;width:26px;height:168px;background:#fff;border-right:1px solid #b9b9b9"></div>
<div class="a" style="left:405px;top:213px;width:16px;height:9px;background:#eef0f3"></div>
<div class="a" style="left:421px;top:213px;width:10px;height:136px;background:linear-gradient(90deg,#f7f8fa,#eceef2)"></div>
<div class="a" style="left:421px;top:215px;width:9px;height:9px;border:1px solid #c9cdd4;border-radius:1px;background:linear-gradient(#fff,#eef0f3)"></div><svg style="left:421.5px;top:216.5px" width="8" height="6" viewBox="0 0 8 6"><path d="M1 5h6l-3-4z" fill="#8e9ec0"/></svg>
<div class="a" style="left:421px;top:339px;width:9px;height:9px;border:1px solid #c9cdd4;border-radius:1px;background:linear-gradient(#fff,#eef0f3)"></div><svg style="left:421.5px;top:340.5px" width="8" height="6" viewBox="0 0 8 6"><path d="M1 1h6l-3 4z" fill="#8e9ec0"/></svg>
<div class="a" style="left:405px;top:251px;width:16px;height:8px;background:#eef0f3"></div>
<div class="a" style="left:396px;top:262px;width:23px;height:23px;border:1px solid #c8c8c8;background:#fff"></div>
<svg style="left:410px;top:270px" width="4" height="5" viewBox="0 0 4 5"><path d="M0 0l4 2.5l-4 2.5z" fill="#111"/></svg>
<div class="a" style="left:405px;top:312px;width:16px;height:10px;background:#eef0f3"></div>
<div class="a" style="left:405px;top:349px;width:25px;height:1px;background:#e2e4e8"></div>
<svg style="left:423px;top:352px" width="3" height="5" viewBox="0 0 3 5"><path d="M0 0l3 2.5l-3 2.5z" fill="#aaa"/></svg>
<div class="a" style="left:400px;top:354px;width:9px;height:21px;border:1px solid #e6c050;border-radius:2px;background:linear-gradient(#fff3c8,#fbdf86 60%,#fff6d8)"></div>
<div class="a" style="left:405px;top:374px;width:25px;height:7px;background:linear-gradient(#f6f7f9,#e9ebef)"></div>
<div class="a" style="left:413px;top:201px;width:18px;height:12px;border:1px solid #e0b34c;border-radius:2px;background:linear-gradient(#fdeeb0,#fbd96f)"></div>
<svg style="left:415px;top:203px" width="10" height="8" viewBox="0 0 10 8"><circle cx="1" cy="1" r="0.9" fill="#2b5fb0"/><circle cx="1" cy="4" r="0.9" fill="#2b5fb0"/><circle cx="1" cy="7" r="0.9" fill="#2b5fb0"/><rect x="3" y="0.5" width="7" height="1" fill="#333"/><rect x="3" y="3.5" width="7" height="1" fill="#333"/><rect x="3" y="6.5" width="7" height="1" fill="#333"/></svg>
<div class="a" style="left:425px;top:202px;width:1px;height:10px;background:#e3b95a"></div>
<svg style="left:426.5px;top:206px" width="4" height="3" viewBox="0 0 4 3"><path d="M0 0h4l-2 2.5z" fill="#555"/></svg>
<div class="a" style="left:433px;top:207px;width:162px;height:14px;background:#fff"></div>
<div class="a" style="left:434px;top:208px;width:23px;height:12px;border:1px solid #d2d6dc;border-left:none;background:#fff;overflow:hidden"><div class="t" style="left:-2px;top:2px;font-size:7.5px;color:#333">Осно</div></div>
<svg style="left:451px;top:213px" width="4" height="3" viewBox="0 0 4 3"><path d="M0 0h4l-2 2.5z" fill="#777"/></svg>
<div class="a" style="left:457px;top:208px;width:30px;height:12px;border:1px solid #d2d6dc;background:#fff"></div>
<div class="t" style="left:460px;top:210px;font-size:7.5px;color:#333;">11</div>
<svg style="left:481px;top:213px" width="4" height="3" viewBox="0 0 4 3"><path d="M0 0h4l-2 2.5z" fill="#777"/></svg>
<div class="t" style="left:490px;top:209px;font-size:10px;color:#222;font-weight:bold;font-family:'Liberation Serif';">A</div><div class="a" style="left:497px;top:209px;width:2px;height:1.5px;background:#2b5fb0"></div><div class="t" style="left:502px;top:211px;font-size:7.5px;color:#222;font-weight:bold;font-family:'Liberation Serif';">A</div><div class="a" style="left:508px;top:210px;width:2px;height:1.5px;background:#2b5fb0"></div>
<div class="a" style="left:513px;top:209px;width:1px;height:10px;background:#e0e0e0"></div>
<div class="t" style="left:519px;top:210px;font-size:9px;color:#222;font-weight:bold;font-family:'Liberation Serif';letter-spacing:-0.5px;">Aa</div>
<svg style="left:531px;top:213px" width="4" height="3" viewBox="0 0 4 3"><path d="M0 0h4l-2 2.5z" fill="#777"/></svg>
<div class="a" style="left:538px;top:209px;width:1px;height:10px;background:#e0e0e0"></div>
<svg style="left:543px;top:209px" width="10" height="10" viewBox="0 0 10 10"><rect x="0.5" y="0.5" width="6" height="4.5" fill="#fff" stroke="#4a6aa0" stroke-width="0.7"/><path d="M3.5 7.5 L7 4 L9.5 6 L6 9.5z" fill="#e8eef8" stroke="#5570a0" stroke-width="0.7"/></svg>
<div class="a" style="left:557px;top:209px;width:1px;height:10px;background:#e0e0e0"></div>
<svg style="left:563px;top:209px" width="14" height="9" viewBox="0 0 14 9"><circle cx="1" cy="1" r="0.9" fill="#2b5fb0"/><circle cx="1" cy="4.5" r="0.9" fill="#2b5fb0"/><circle cx="1" cy="8" r="0.9" fill="#2b5fb0"/><rect x="3" y="0.5" width="6" height="1" fill="#444"/><rect x="3" y="4" width="6" height="1" fill="#444"/><rect x="3" y="7.5" width="6" height="1" fill="#444"/><path d="M10.5 4h3l-1.5 2z" fill="#777"/></svg>
<div class="a" style="left:575px;top:208px;width:19px;height:12px;border:1px solid #e0b34c;border-radius:2px;background:linear-gradient(#fdeeb0,#fbd96f)"></div>
<svg style="left:577px;top:210px" width="10" height="8" viewBox="0 0 10 8"><rect x="0" y="0" width="1.3" height="8" fill="#2b5fb0"/><rect x="3" y="0.5" width="7" height="1" fill="#333"/><rect x="3" y="3.5" width="7" height="1" fill="#333"/><rect x="3" y="6.5" width="7" height="1" fill="#333"/></svg>
<div class="a" style="left:588px;top:209px;width:1px;height:10px;background:#e3b95a"></div>
<svg style="left:589.5px;top:213px" width="4" height="3" viewBox="0 0 4 3"><path d="M0 0h4l-2 2.5z" fill="#555"/></svg>
<div class="a" style="left:432px;top:221px;width:163px;height:160px;background:#fff;border-left:1px solid #d0d0d0;border-right:1px solid #9a9a9a"></div>
<div class="a" style="left:433px;top:222px;width:151px;height:9px;background:#eef0f3"></div><div class="t" style="left:437px;top:223.5px;font-size:7.2px;color:#333;font-weight:bold;transform:scaleX(0.85);transform-origin:0 0;">Последние использованные форматы номеров</div>
<div class="a" style="left:584px;top:221px;width:10px;height:160px;background:linear-gradient(90deg,#f7f8fa,#eceef2)"></div>
<div class="a" style="left:585px;top:222px;width:9px;height:9px;border:1px solid #c9cdd4;border-radius:1px;background:linear-gradient(#fff,#eef0f3)"></div><svg style="left:585.5px;top:223.5px" width="8" height="6" viewBox="0 0 8 6"><path d="M1 5h6l-3-4z" fill="#8e9ec0"/></svg>
<div class="a" style="left:436.5px;top:233.5px;width:41px;height:41px;border:1px solid #c8c8c8;background:#fff"></div>
<div class="t" style="left:440.0px;top:238.5px;font-size:7.5px;color:#333;">1.</div><div class="a" style="left:448.5px;top:243.0px;width:26.5px;height:1px;background:#7a7a7a"></div><div class="t" style="left:440.0px;top:248.8px;font-size:7.5px;color:#333;">2.</div><div class="a" style="left:448.5px;top:253.3px;width:26.5px;height:1px;background:#7a7a7a"></div><div class="t" style="left:440.0px;top:259.1px;font-size:7.5px;color:#333;">3.</div><div class="a" style="left:448.5px;top:263.6px;width:26.5px;height:1px;background:#7a7a7a"></div>
<div class="a" style="left:433px;top:277px;width:151px;height:9px;background:#eef0f3"></div><div class="t" style="left:437px;top:278.5px;font-size:7.2px;color:#333;font-weight:bold;transform:scaleX(0.85);transform-origin:0 0;">Библиотека нумерации</div>
<div class="a" style="left:435.0px;top:287.0px;width:44px;height:45px;border:2px solid #f0c85a;border-radius:2px;background:#fff;box-shadow:inset 0 0 0 1px #e6d7a8"></div>
<div class="t" style="left:451px;top:306px;font-size:8px;color:#222;">нет</div>
<div class="a" style="left:482px;top:289px;width:41px;height:41px;border:1px solid #c8c8c8;background:#fff"></div>
<div class="t" style="left:485.5px;top:294.0px;font-size:7.5px;color:#333;">1.</div><div class="a" style="left:494.0px;top:298.5px;width:26.5px;height:1px;background:#7a7a7a"></div><div class="t" style="left:485.5px;top:304.3px;font-size:7.5px;color:#333;">2.</div><div class="a" style="left:494.0px;top:308.8px;width:26.5px;height:1px;background:#7a7a7a"></div><div class="t" style="left:485.5px;top:314.6px;font-size:7.5px;color:#333;">3.</div><div class="a" style="left:494.0px;top:319.1px;width:26.5px;height:1px;background:#7a7a7a"></div>
<div class="a" style="left:528px;top:289px;width:41px;height:41px;border:1px solid #c8c8c8;background:#fff"></div>
<div class="t" style="left:531.5px;top:294.0px;font-size:7.5px;color:#333;">1)</div><div class="a" style="left:540.4px;top:298.5px;width:26.1px;height:1px;background:#7a7a7a"></div><div class="t" style="left:531.5px;top:304.3px;font-size:7.5px;color:#333;">2)</div><div class="a" style="left:540.4px;top:308.8px;width:26.1px;height:1px;background:#7a7a7a"></div><div class="t" style="left:531.5px;top:314.6px;font-size:7.5px;color:#333;">3)</div><div class="a" style="left:540.4px;top:319.1px;width:26.1px;height:1px;background:#7a7a7a"></div>
<div class="a" style="left:436.5px;top:335px;width:41px;height:41px;border:1px solid #c8c8c8;background:#fff"></div>
<div class="t" style="left:440.0px;top:340.0px;font-size:7.5px;color:#333;">I.</div><div class="a" style="left:446.4px;top:344.5px;width:28.6px;height:1px;background:#7a7a7a"></div><div class="t" style="left:440.0px;top:350.3px;font-size:7.5px;color:#333;">II.</div><div class="a" style="left:448.5px;top:354.8px;width:26.5px;height:1px;background:#7a7a7a"></div><div class="t" style="left:440.0px;top:360.6px;font-size:7.5px;color:#333;">III.</div><div class="a" style="left:450.5px;top:365.1px;width:24.5px;height:1px;background:#7a7a7a"></div>
<div class="a" style="left:482px;top:335px;width:41px;height:41px;border:1px solid #c8c8c8;background:#fff"></div>
<div class="t" style="left:485.5px;top:340.0px;font-size:7.5px;color:#333;">A.</div><div class="a" style="left:494.8px;top:344.5px;width:25.7px;height:1px;background:#7a7a7a"></div><div class="t" style="left:485.5px;top:350.3px;font-size:7.5px;color:#333;">B.</div><div class="a" style="left:494.8px;top:354.8px;width:25.7px;height:1px;background:#7a7a7a"></div><div class="t" style="left:485.5px;top:360.6px;font-size:7.5px;color:#333;">C.</div><div class="a" style="left:495.2px;top:365.1px;width:25.3px;height:1px;background:#7a7a7a"></div>
<div class="a" style="left:528px;top:335px;width:41px;height:41px;border:1px solid #c8c8c8;background:#fff"></div>
<div class="t" style="left:531.5px;top:340.0px;font-size:7.5px;color:#333;">a)</div><div class="a" style="left:540.4px;top:344.5px;width:26.1px;height:1px;background:#7a7a7a"></div><div class="t" style="left:531.5px;top:350.3px;font-size:7.5px;color:#333;">b)</div><div class="a" style="left:540.4px;top:354.8px;width:26.1px;height:1px;background:#7a7a7a"></div><div class="t" style="left:531.5px;top:360.6px;font-size:7.5px;color:#333;">c)</div><div class="a" style="left:539.9px;top:365.1px;width:26.6px;height:1px;background:#7a7a7a"></div>
<div class="a" style="left:436.5px;top:380px;width:41px;height:1px;background:#c8c8c8"></div><div class="a" style="left:482px;top:380px;width:41px;height:1px;background:#c8c8c8"></div>
<div class="a" style="left:600px;top:199px;width:170px;height:14px;background:#fff"></div>
<div class="a" style="left:601px;top:200px;width:15px;height:12px;border:1px solid #d2d6dc;border-left:none;background:#fff;overflow:hidden"><div class="t" style="left:0px;top:2px;font-size:7.5px;color:#333">Rc</div></div>
<svg style="left:611px;top:205px" width="4" height="3" viewBox="0 0 4 3"><path d="M0 0h4l-2 2.5z" fill="#777"/></svg>
<div class="a" style="left:616px;top:200px;width:30px;height:12px;border:1px solid #d2d6dc;background:#fff"></div>
<div class="t" style="left:619px;top:202px;font-size:7.5px;color:#333;">14</div>
<svg style="left:640px;top:205px" width="4" height="3" viewBox="0 0 4 3"><path d="M0 0h4l-2 2.5z" fill="#777"/></svg>
<div class="t" style="left:649px;top:201px;font-size:10px;color:#222;font-weight:bold;font-family:'Liberation Serif';">A</div><div class="a" style="left:656px;top:201px;width:2px;height:1.5px;background:#2b5fb0"></div><div class="t" style="left:661px;top:203px;font-size:7.5px;color:#222;font-weight:bold;font-family:'Liberation Serif';">A</div><div class="a" style="left:667px;top:202px;width:2px;height:1.5px;background:#2b5fb0"></div>
<div class="a" style="left:672px;top:201px;width:1px;height:10px;background:#e0e0e0"></div>
<div class="t" style="left:678px;top:202px;font-size:9px;color:#222;font-weight:bold;font-family:'Liberation Serif';letter-spacing:-0.5px;">Aa</div>
<svg style="left:690px;top:205px" width="4" height="3" viewBox="0 0 4 3"><path d="M0 0h4l-2 2.5z" fill="#777"/></svg>
<div class="a" style="left:696px;top:201px;width:1px;height:10px;background:#e0e0e0"></div>
<svg style="left:700px;top:201px" width="10" height="10" viewBox="0 0 10 10"><rect x="0.5" y="0.5" width="6" height="4.5" fill="#fff" stroke="#4a6aa0" stroke-width="0.7"/><path d="M3.5 7.5 L7 4 L9.5 6 L6 9.5z" fill="#e8eef8" stroke="#5570a0" stroke-width="0.7"/></svg>
<div class="a" style="left:713px;top:201px;width:1px;height:10px;background:#e0e0e0"></div>
<svg style="left:718px;top:202px" width="14" height="9" viewBox="0 0 14 9"><circle cx="1" cy="1" r="0.9" fill="#2b5fb0"/><circle cx="1" cy="4.5" r="0.9" fill="#2b5fb0"/><circle cx="1" cy="8" r="0.9" fill="#2b5fb0"/><rect x="3" y="0.5" width="6" height="1" fill="#444"/><rect x="3" y="4" width="6" height="1" fill="#444"/><rect x="3" y="7.5" width="6" height="1" fill="#444"/><path d="M10.5 4h3l-1.5 2z" fill="#777"/></svg>
<svg style="left:737px;top:202px" width="14" height="9" viewBox="0 0 14 9"><rect x="0" y="0" width="1.3" height="9" fill="#2b5fb0"/><rect x="3" y="0.5" width="6" height="1" fill="#444"/><rect x="3" y="4" width="6" height="1" fill="#444"/><rect x="3" y="7.5" width="6" height="1" fill="#444"/><path d="M10.5 4h3l-1.5 2z" fill="#777"/></svg>
<div class="a" style="left:753.5px;top:200px;width:16px;height:12px;border:1px solid #e0b34c;border-radius:2px;background:linear-gradient(#fdeeb0,#fbd96f)"></div>
<svg style="left:755px;top:202px" width="13" height="9" viewBox="0 0 13 9"><rect x="0" y="0.5" width="1" height="1.5" fill="#2b5fb0"/><rect x="2" y="0.5" width="6" height="1" fill="#333"/><rect x="3" y="4" width="1" height="1.5" fill="#2b5fb0"/><rect x="5" y="4" width="4" height="1" fill="#333"/><rect x="5" y="7.5" width="1" height="1.5" fill="#2b5fb0"/><rect x="7" y="7.5" width="2" height="1" fill="#333"/><path d="M10 4h3l-1.5 2z" fill="#555"/></svg>
<div class="a" style="left:602px;top:213.5px;width:167px;height:6.5px;background:#8d8d8d"></div>
<div class="t" style="left:607px;top:213px;font-size:6.5px;color:#e8e8e8;font-weight:bold;">Все ▾</div>
<div class="a" style="left:601px;top:220px;width:169px;height:161px;background:#fff;border-left:1px solid #d0d0d0;border-right:1px solid #9a9a9a"></div>
<div class="a" style="left:602px;top:221px;width:157px;height:10px;background:#eef0f3"></div><div class="t" style="left:606px;top:222.5px;font-size:7.2px;color:#333;font-weight:bold;transform:scaleX(0.85);transform-origin:0 0;">Текущий список</div>
<div class="a" style="left:759px;top:220px;width:10px;height:161px;background:linear-gradient(90deg,#f7f8fa,#eceef2)"></div>
<div class="a" style="left:760px;top:222px;width:9px;height:9px;border:1px solid #c9cdd4;border-radius:1px;background:linear-gradient(#fff,#eef0f3)"></div><svg style="left:760.5px;top:223.5px" width="8" height="6" viewBox="0 0 8 6"><path d="M1 5h6l-3-4z" fill="#8e9ec0"/></svg>
<div class="a" style="left:605px;top:233px;width:41px;height:41px;border:1px solid #c8c8c8;background:#fff"></div>
<div class="t" style="left:608.3px;top:238.0px;font-size:7.5px;color:#333;">1.</div><div class="a" style="left:616.8px;top:242.5px;width:26.7px;height:1px;background:#7a7a7a"></div><div class="t" style="left:614.5px;top:248.3px;font-size:7.5px;color:#333;">a.</div><div class="a" style="left:623.0px;top:252.8px;width:20.5px;height:1px;background:#7a7a7a"></div><div class="t" style="left:622.7px;top:258.6px;font-size:7.5px;color:#333;">i.</div><div class="a" style="left:628.7px;top:263.1px;width:14.8px;height:1px;background:#7a7a7a"></div>
<div class="a" style="left:602px;top:276px;width:157px;height:9px;background:#eef0f3"></div><div class="t" style="left:606px;top:277.5px;font-size:7.2px;color:#333;font-weight:bold;transform:scaleX(0.85);transform-origin:0 0;">Библиотека списков</div>
<div class="a" style="left:603.5px;top:287.0px;width:44px;height:45px;border:2px solid #f0c85a;border-radius:2px;background:#fff;box-shadow:inset 0 0 0 1px #e6d7a8"></div>
<div class="t" style="left:620px;top:306px;font-size:8px;color:#222;">нет</div>
<div class="a" style="left:650.5px;top:288.5px;width:41px;height:41px;border:1px solid #c8c8c8;background:#fff"></div>
<div class="t" style="left:654px;top:293.5px;font-size:7.5px;color:#333;">1)</div><div class="a" style="left:662.9px;top:298.0px;width:26.1px;height:1px;background:#7a7a7a"></div><div class="t" style="left:657px;top:303.8px;font-size:7.5px;color:#333;">a)</div><div class="a" style="left:665.9px;top:308.3px;width:23.1px;height:1px;background:#7a7a7a"></div><div class="t" style="left:660px;top:314.1px;font-size:7.5px;color:#333;">i)</div><div class="a" style="left:666.4px;top:318.6px;width:22.6px;height:1px;background:#7a7a7a"></div>
<div class="a" style="left:696px;top:288.5px;width:41px;height:41px;border:1px solid #c8c8c8;background:#fff"></div>
<div class="t" style="left:700px;top:293.5px;font-size:7.5px;color:#333;">1.</div><div class="a" style="left:708.5px;top:298.0px;width:26.0px;height:1px;background:#7a7a7a"></div><div class="t" style="left:703px;top:303.8px;font-size:7.5px;color:#333;">1.1.</div><div class="a" style="left:717.7px;top:308.3px;width:16.8px;height:1px;background:#7a7a7a"></div><div class="t" style="left:706.5px;top:314.1px;font-size:7.5px;color:#333;">1.1.1.</div><div class="a" style="left:727.5px;top:318.6px;width:7.0px;height:1px;background:#7a7a7a"></div>
<div class="a" style="left:605px;top:334.5px;width:41px;height:41px;border:1px solid #c8c8c8;background:#fff"></div>
<div class="a" style="left:608.5px;top:341.5px;width:3.5px;height:3.5px;border:1px solid #333;transform:rotate(45deg)"></div><div class="a" style="left:615px;top:343px;width:28px;height:1px;background:#7a7a7a"></div>
<svg style="left:610px;top:351px" width="4" height="4" viewBox="0 0 4 4"><path d="M0 0l4 2l-4 2l1-2z" fill="#333"/></svg><div class="a" style="left:617px;top:353px;width:26px;height:1px;background:#7a7a7a"></div>
<div class="a" style="left:614px;top:362px;width:2px;height:2px;background:#222"></div><div class="a" style="left:618px;top:363px;width:25px;height:1px;background:#7a7a7a"></div>
<div class="a" style="left:650.5px;top:334.5px;width:41px;height:41px;border:1px solid #c8c8c8;background:#fff;overflow:hidden"><div class="t" style="left:2.5px;top:4px;font-size:6.3px;color:#333;font-weight:bold;transform:scaleX(0.9);transform-origin:0 0;">Статья I.</div><div class="t" style="left:30px;top:5px;font-size:5px;color:#999;">Заго</div><div class="t" style="left:2.5px;top:14px;font-size:6.3px;color:#333;font-weight:bold;transform:scaleX(0.9);transform-origin:0 0;">Раздел 1.01 :</div><div class="t" style="left:6px;top:24.5px;font-size:6.3px;color:#333;font-weight:bold;">(a)</div><div class="t" style="left:15.5px;top:25.5px;font-size:5px;color:#999;">Заголовок</div></div>
<div class="a" style="left:696px;top:334.5px;width:41px;height:41px;border:1px solid #c8c8c8;background:#fff;overflow:hidden"><div class="t" style="left:2.5px;top:4px;font-size:6.3px;color:#333;font-weight:bold;">1</div><div class="t" style="left:8px;top:5px;font-size:5px;color:#999;">Заголовок 1–</div><div class="t" style="left:2.5px;top:14px;font-size:6.3px;color:#333;font-weight:bold;">1.1</div><div class="t" style="left:13px;top:15px;font-size:5px;color:#999;">Заголовок :</div><div class="t" style="left:2.5px;top:24.5px;font-size:6.3px;color:#333;font-weight:bold;">1.1.1</div><div class="t" style="left:19px;top:25.5px;font-size:5px;color:#999;">Заголовс</div></div>
<div class="a" style="left:605px;top:380px;width:41px;height:1px;background:#c8c8c8"></div><div class="a" style="left:650.5px;top:380px;width:41px;height:1px;background:#c8c8c8"></div>
<div class="t" style="left:771px;top:367px;font-size:16.8px;color:#000;font-family:'Liberation Serif';">¶</div>
<div class="a" style="left:432px;top:376px;width:1.5px;height:1.5px;background:#333"></div><div class="a" style="left:597px;top:376px;width:1.5px;height:1.5px;background:#333"></div>

<!-- doc text -->
<style>.doc{position:absolute;white-space:pre;font-family:"Liberation Serif",serif;color:#000;line-height:1}.doc i{font-style:normal;display:inline-block;width:0.25em;text-align:center;overflow:visible}.doc .pil{font-weight:normal}</style>
<div class="doc" style="left:262px;top:387px;font-size:16.8px;letter-spacing:0.09px">Если<i>·</i>в<i>·</i>списке<i>·</i>маркеров<i>·</i>нет<i>·</i>необходимого,<i>·</i>можно<i>·</i>добавить<i>·</i>новый<i>·</i>символ<b class="pil">¶</b></div>
<div class="doc" style="left:262px;top:411px;font-size:16.8px"><b class="pil">¶</b></div>
<div class="doc" style="left:262px;top:431px;font-size:14.4px;font-weight:bold">БОГИ<i>·</i>ОЛИМПА<span style="font-weight:normal">¶</span></div>
<div class="a" style="left:285px;top:467.3px;width:5px;height:5px;border-radius:50%;background:#000"></div><svg style="left:292px;top:467.3px" width="11" height="6" viewBox="0 0 11 6"><path d="M0 3h7" stroke="#000" stroke-width="1.3"/><path d="M6 0.3 L10.5 3 L6 5.7z" fill="#000"/></svg>
<div class="doc" style="left:305px;top:462.3px;font-size:14.4px">Зевс<i>·</i>—<i>·</i>верховный<i>·</i>бог<i>·</i>древнегреческого<i>·</i> пантеона,<i>·</i>бог<i>·</i>неба,<i>·</i>грома<i>·</i>и<i>·</i>молний.<b class="pil">¶</b></div>
<div class="a" style="left:285px;top:484.9px;width:5px;height:5px;border-radius:50%;background:#000"></div><svg style="left:292px;top:484.9px" width="11" height="6" viewBox="0 0 11 6"><path d="M0 3h7" stroke="#000" stroke-width="1.3"/><path d="M6 0.3 L10.5 3 L6 5.7z" fill="#000"/></svg>
<div class="doc" style="left:305px;top:479.9px;font-size:14.4px">Гера<i>·</i>—<i>·</i>жена<i>·</i>Зевса,<i>·</i>покровительница<i>·</i>брака,<i>·</i>семейной<i>·</i>любви.<b class="pil">¶</b></div>
<div class="a" style="left:285px;top:502.4px;width:5px;height:5px;border-radius:50%;background:#000"></div><svg style="left:292px;top:502.4px" width="11" height="6" viewBox="0 0 11 6"><path d="M0 3h7" stroke="#000" stroke-width="1.3"/><path d="M6 0.3 L10.5 3 L6 5.7z" fill="#000"/></svg>
<div class="doc" style="left:305px;top:497.4px;font-size:14.4px">Посейдон<i>·</i>—<i>·</i>бог<i>·</i>морской<i>·</i>стихии.<b class="pil">¶</b></div>
<div class="a" style="left:285px;top:519.9px;width:5px;height:5px;border-radius:50%;background:#000"></div><svg style="left:292px;top:519.9px" width="11" height="6" viewBox="0 0 11 6"><path d="M0 3h7" stroke="#000" stroke-width="1.3"/><path d="M6 0.3 L10.5 3 L6 5.7z" fill="#000"/></svg>
<div class="doc" style="left:305px;top:514.9px;font-size:14.4px">Аид<i>·</i>—<i>·</i>владыка<i>·</i>царства<i>·</i>мёртвых.<b class="pil">¶</b></div>
<div class="a" style="left:285px;top:537.5px;width:5px;height:5px;border-radius:50%;background:#000"></div><svg style="left:292px;top:537.5px" width="11" height="6" viewBox="0 0 11 6"><path d="M0 3h7" stroke="#000" stroke-width="1.3"/><path d="M6 0.3 L10.5 3 L6 5.7z" fill="#000"/></svg>
<div class="doc" style="left:305px;top:532.5px;font-size:14.4px">Деметра<i>·</i>—<i>·</i>богиня<i>·</i>плодородия<i>·</i>и<i>·</i>земледелия.<b class="pil">¶</b></div>
<div class="a" style="left:285px;top:555.0px;width:5px;height:5px;border-radius:50%;background:#000"></div><svg style="left:292px;top:555.0px" width="11" height="6" viewBox="0 0 11 6"><path d="M0 3h7" stroke="#000" stroke-width="1.3"/><path d="M6 0.3 L10.5 3 L6 5.7z" fill="#000"/></svg>
<div class="doc" style="left:305px;top:550.0px;font-size:14.4px">Гестия<i>·</i>—<i>·</i>богиня<i>·</i>домашнего<i>·</i>очага.<b class="pil">¶</b></div>
<div class="a" style="left:285px;top:572.6px;width:5px;height:5px;border-radius:50%;background:#000"></div><svg style="left:292px;top:572.6px" width="11" height="6" viewBox="0 0 11 6"><path d="M0 3h7" stroke="#000" stroke-width="1.3"/><path d="M6 0.3 L10.5 3 L6 5.7z" fill="#000"/></svg>
<div class="doc" style="left:305px;top:567.6px;font-size:14.4px">Афина<i>·</i>—<i>·</i>богиня<i>·</i>мудрости,<i>·</i>войны,<i>·</i>справедливости<i>·</i>и<i>·</i>ремёсел.<b class="pil">¶</b></div>
<div class="a" style="left:285px;top:590.2px;width:5px;height:5px;border-radius:50%;background:#000"></div><svg style="left:292px;top:590.2px" width="11" height="6" viewBox="0 0 11 6"><path d="M0 3h7" stroke="#000" stroke-width="1.3"/><path d="M6 0.3 L10.5 3 L6 5.7z" fill="#000"/></svg>
<div class="doc" style="left:305px;top:585.2px;font-size:14.4px">Арес<i>·</i>—<i>·</i>бог<i>·</i>войны<i>·</i>и<i>·</i>кровопролития.<b class="pil">¶</b></div>
<div class="a" style="left:285px;top:607.7px;width:5px;height:5px;border-radius:50%;background:#000"></div><svg style="left:292px;top:607.7px" width="11" height="6" viewBox="0 0 11 6"><path d="M0 3h7" stroke="#000" stroke-width="1.3"/><path d="M6 0.3 L10.5 3 L6 5.7z" fill="#000"/></svg>
<div class="doc" style="left:305px;top:602.7px;font-size:14.4px">Персефона<i>·</i>—<i>·</i>богиня<i>·</i>весны,<i>·</i>королева<i>·</i>Царства<i>·</i>Мёртвых.<b class="pil">¶</b></div>
<div class="a" style="left:285px;top:625.3px;width:5px;height:5px;border-radius:50%;background:#000"></div><svg style="left:292px;top:625.3px" width="11" height="6" viewBox="0 0 11 6"><path d="M0 3h7" stroke="#000" stroke-width="1.3"/><path d="M6 0.3 L10.5 3 L6 5.7z" fill="#000"/></svg>
<div class="doc" style="left:305px;top:620.3px;font-size:14.4px">Афродита<i>·</i>—<i>·</i>богиня<i>·</i>любви<i>·</i>и<i>·</i>красоты.<b class="pil">¶</b></div>
<div class="a" style="left:285px;top:642.8px;width:5px;height:5px;border-radius:50%;background:#000"></div><svg style="left:292px;top:642.8px" width="11" height="6" viewBox="0 0 11 6"><path d="M0 3h7" stroke="#000" stroke-width="1.3"/><path d="M6 0.3 L10.5 3 L6 5.7z" fill="#000"/></svg>
<div class="doc" style="left:305px;top:637.8px;font-size:14.4px">Гефест<i>·</i>—<i>·</i>бог<i>·</i>огня<i>·</i>и<i>·</i>кузнечного<i>·</i>ремесла.<b class="pil">¶</b></div>
<div class="a" style="left:285px;top:660.3px;width:5px;height:5px;border-radius:50%;background:#000"></div><svg style="left:292px;top:660.3px" width="11" height="6" viewBox="0 0 11 6"><path d="M0 3h7" stroke="#000" stroke-width="1.3"/><path d="M6 0.3 L10.5 3 L6 5.7z" fill="#000"/></svg>
<div class="doc" style="left:305px;top:655.3px;font-size:14.4px">Гермес<i>·</i>—<i>·</i>бог<i>·</i>торговли,<i>·</i>хитрости,<i>·</i>скорости<i>·</i>и<i>·</i>воровства.<b class="pil">¶</b></div>
<div class="a" style="left:285px;top:677.9px;width:5px;height:5px;border-radius:50%;background:#000"></div><svg style="left:292px;top:677.9px" width="11" height="6" viewBox="0 0 11 6"><path d="M0 3h7" stroke="#000" stroke-width="1.3"/><path d="M6 0.3 L10.5 3 L6 5.7z" fill="#000"/></svg>
<div class="doc" style="left:305px;top:672.9px;font-size:14.4px">Аполлон<i>·</i>—<i>·</i>бог<i>·</i>света,<i>·</i>покровитель<i>·</i>искусств.<i>·</i>Также<i>·</i>бог-врачеватель<i>·</i>и<i>·</i>покровитель<i>·</i></div>
<div class="doc" style="left:305px;top:690.4px;font-size:14.4px">оракулов.<b class="pil">¶</b></div>

<svg style="left:0;top:0" width="1" height="1"><path d="M465 402.5 L467 401.5 L469 403.5 L471 401.5 L473 403.5 L475 401.5 L477 403.5 L479 401.5 L481 403.5 L483 401.5 L485 403.5 L487 401.5 L489 403.5 L491 401.5 L493 403.5 L495 401.5 L497 403.5 L499 401.5 L501 403.5 L503 401.5 L505 403.5 L507 401.5 L509 403.5 L511 401.5 L513 403.5 L515 401.5 L517 403.5 L519 401.5 L521 403.5 L523 401.5 L525 403.5 L527 401.5 L529 403.5 L531 401.5 L533 403.5 L535 401.5 L537 403.5 L539 401.5 L541 403.5 L543 401.5 L545 403.5 L547 401.5 L549 403.5 L551 401.5 L553 403.5 L555 401.5 L557 403.5 L559 401.5 L561 403.5 L563 401.5 L565 403.5 L567 401.5 L569 403.5 L571 401.5" fill="none" stroke="#3cb04a" stroke-width="1.1"/></svg>
<svg style="left:0;top:0" width="1" height="1"><path d="M305 563 L307 562 L309 564 L311 562 L313 564 L315 562 L317 564 L319 562 L321 564 L323 562 L325 564 L327 562 L329 564 L331 562 L333 564 L335 562 L337 564 L339 562 L341 564 L343 562 L345 564" fill="none" stroke="#f03030" stroke-width="1.2"/></svg>
<!-- ===== DROPDOWN ===== -->
<div class="a" style="left:104px;top:84px;width:310px;height:307px;background:rgba(0,0,0,0.10);filter:blur(2px)"></div>
<div class="a" style="left:102px;top:81px;width:309px;height:307px;background:#fff;border:1px solid #a9aeb5"></div>
<div class="a" style="left:103px;top:83px;width:289px;height:18px;background:#eef0f3"></div><div class="t" style="left:111px;top:88px;font-size:11px;font-weight:bold;color:#474a4f">Последние использованные маркеры</div>
<div class="a" style="left:103px;top:149px;width:289px;height:18px;background:#eef0f3"></div><div class="t" style="left:111px;top:154px;font-size:11px;font-weight:bold;color:#474a4f">Библиотека маркеров</div>
<div class="a" style="left:103px;top:263px;width:289px;height:18px;background:#eef0f3"></div><div class="t" style="left:111px;top:268px;font-size:11px;font-weight:bold;color:#474a4f">Маркеры в документе</div>
<div class="a" style="left:392px;top:82px;width:17px;height:247px;background:linear-gradient(90deg,#f4f5f7,#eaecf0)"></div>
<div class="a" style="left:393px;top:83px;width:15px;height:17px;border:1px solid #c4c9d1;border-radius:2px;background:linear-gradient(#fdfdfe,#eceef2)"></div>
<svg style="left:395px;top:88px" width="11" height="7" viewBox="0 0 11 7"><path d="M0.5 6.5h10l-5-6z" fill="#8393b5"/></svg>
<div class="a" style="left:393px;top:312px;width:15px;height:17px;border:1px solid #c4c9d1;border-radius:2px;background:linear-gradient(#f7f8fa,#e6e9ee)"></div>
<svg style="left:395px;top:317px" width="11" height="7" viewBox="0 0 11 7"><path d="M0.5 0.5h10l-5 6z" fill="#8ea0c8"/></svg>
<div class="a" style="left:108px;top:105px;width:40px;height:40px;border:1px solid #b3b3b3;background:#fff"></div>
<div class="a" style="left:124px;top:121px;width:9px;height:9px;background:#000"></div>
<div class="a" style="left:156px;top:105px;width:40px;height:40px;border:1px solid #b3b3b3;background:#fff"></div>
<div class="a" style="left:171.0px;top:123.0px;width:10px;height:10px;border-radius:50%;background:#000"></div>
<div class="a" style="left:104px;top:167px;width:48px;height:48px;border:1px solid #e9b84a;border-radius:3px;background:linear-gradient(#fef6d0,#fde79e)"></div><div class="a" style="left:108px;top:171px;width:40px;height:40px;border:1px solid #b3b3b3;background:#fff"></div>
<div class="t" style="left:119px;top:186px;font-size:11px;color:#111">нет</div>
<div class="a" style="left:156px;top:171px;width:40px;height:40px;border:1px solid #b3b3b3;background:#fff"></div>
<div class="a" style="left:171.0px;top:188.0px;width:10px;height:10px;border-radius:50%;background:#000"></div>
<div class="a" style="left:204px;top:171px;width:40px;height:40px;border:1px solid #b3b3b3;background:#fff"></div>
<div class="a" style="left:216.5px;top:185.5px;width:16px;height:15px;border-radius:50%;border:2px solid #000"></div>
<div class="a" style="left:252px;top:171px;width:40px;height:40px;border:1px solid #b3b3b3;background:#fff"></div>
<div class="a" style="left:268px;top:187px;width:9px;height:9px;background:#000"></div>
<div class="a" style="left:300px;top:171px;width:40px;height:40px;border:1px solid #b3b3b3;background:#fff"></div>
<svg style="left:310px;top:182px" width="20" height="18" viewBox="0 0 20 18"><rect x="5.5" y="2.5" width="9" height="8" fill="#ffd84a" opacity="0.9"/><rect x="1" y="7" width="9" height="7" fill="#ff4d6d" opacity="0.6"/><rect x="8" y="9" width="9" height="6" fill="#4d6dff" opacity="0.75"/><rect x="9.8" y="2" width="1.5" height="14" fill="#000"/><rect x="4" y="11" width="13" height="1.5" fill="#000"/></svg>
<div class="a" style="left:348px;top:171px;width:40px;height:40px;border:1px solid #b3b3b3;background:#fff"></div>
<svg style="left:357.5px;top:179.5px" width="22" height="22" viewBox="0 0 22 22"><path d="M11 0 L15.5 4.5 L11 9 L6.5 4.5z M11 13 L15.5 17.5 L11 22 L6.5 17.5z M0 11 L4.5 6.5 L9 11 L4.5 15.5z M13 11 L17.5 6.5 L22 11 L17.5 15.5z" fill="#000"/></svg>
<div class="a" style="left:108px;top:219px;width:40px;height:40px;border:1px solid #b3b3b3;background:#fff"></div>
<svg style="left:117px;top:227px" width="24" height="24" viewBox="0 0 24 24"><path d="M2.5 1.5 L22 11.5 L2.5 22.5 L10 11.5z" fill="#fff" stroke="#000" stroke-width="0.8"/><path d="M10 11.5 L22 11.5 L2.5 22.5z" fill="#000"/></svg>
<div class="a" style="left:156px;top:219px;width:40px;height:40px;border:1px solid #b3b3b3;background:#fff"></div>
<svg style="left:166px;top:225px" width="22" height="20" viewBox="0 0 22 20"><path d="M0.5 12 L3 10.5 L7 14.5 C10 8 15 3 21.5 0.5 C15 5 10 12 7.5 19.5 L6 19.5 C4.5 16 2.5 13.5 0.5 12z" fill="#000"/></svg>
<div class="a" style="left:108px;top:285px;width:40px;height:40px;border:1px solid #b3b3b3;background:#fff"></div>
<svg style="left:118px;top:291px" width="22" height="20" viewBox="0 0 22 20"><path d="M0.5 12 L3 10.5 L7 14.5 C10 8 15 3 21.5 0.5 C15 5 10 12 7.5 19.5 L6 19.5 C4.5 16 2.5 13.5 0.5 12z" fill="#000"/></svg>
<div class="a" style="left:156px;top:285px;width:40px;height:40px;border:1px solid #b3b3b3;background:#fff"></div>
<div class="a" style="left:171.0px;top:303.0px;width:10px;height:10px;border-radius:50%;background:#000"></div>
<div class="a" style="left:204px;top:285px;width:40px;height:40px;border:1px solid #b3b3b3;background:#fff"></div>
<svg style="left:204px;top:290px" width="40" height="32" viewBox="0 0 40 32"><path d="M16.5 23 C14 26 8.5 26 7 22.5 C6 19.5 8.5 17.2 12 17.5 C16 18 19.5 23 26 24.5 C31 25.5 35 21.5 34.6 16 C34.2 12 30.5 9.2 26 9" fill="none" stroke="#000" stroke-width="2.1"/><path d="M15.8 19.5 C15.5 14.5 18.5 12.3 20.8 12.5 C23 12.8 23.8 15 23.5 17" fill="none" stroke="#000" stroke-width="2"/><path d="M5 9 C9 8.3 14.5 9.5 16.2 14.5 C13 15.5 10.5 15 9.3 13.2 C8.2 11.5 6.5 10 5 9z" fill="#000"/></svg>
<div class="a" style="left:252px;top:285px;width:40px;height:40px;border:1px solid #b3b3b3;background:#fff"></div>
<div class="a" style="left:268px;top:301px;width:9px;height:9px;background:#000"></div>
<div class="a" style="left:103px;top:329px;width:307px;height:1px;background:#e3e5e8"></div>
<div class="a" style="left:128px;top:331px;width:1px;height:21px;background:#e2e4e7"></div>
<svg style="left:107px;top:335px" width="16" height="12" viewBox="0 0 16 12"><path d="M5 1h10M9 5.5h6M5 10h10" stroke="#9aa0a8" stroke-width="1"/><path d="M0.5 5.5h6" stroke="#9aa0a8"/><path d="M3 3l-2.5 2.5l2.5 2.5" stroke="#9aa0a8" fill="none"/><path d="M4 3.5l2.5 2l-2.5 2" stroke="#9aa0a8" fill="none"/></svg>
<div class="t" style="left:137px;top:336.5px;font-size:11.5px;color:#a1a5ab"><u>И</u>зменить уровень списка</div>
<svg style="left:396px;top:338px" width="5" height="8" viewBox="0 0 5 8"><path d="M0 0l4.5 4l-4.5 4z" fill="#a9adb3"/></svg>
<div class="a" style="left:104px;top:353px;width:305px;height:22px;border:1px solid #e9c35a;border-radius:3px;background:linear-gradient(#fef4cf 0%,#fce7a6 40%,#fbdd84 65%,#fde9a8 85%,#fff6dc 100%)"></div>
<div class="t" style="left:137px;top:359px;font-size:11.5px;color:#333"><u>О</u>пределить новый маркер...</div>
<div class="a" style="left:103px;top:376px;width:307px;height:11px;background:linear-gradient(#f6f7f9,#e7e9ed);border-top:1px solid #e3e5e8"></div>
<svg style="left:399px;top:378px" width="8" height="8" viewBox="0 0 8 8" fill="#b0b4ba"><rect x="5" y="1" width="1.5" height="1.5"/><rect x="2" y="4" width="1.5" height="1.5"/><rect x="5" y="4" width="1.5" height="1.5"/></svg>

<!-- ===== SCROLLBAR ===== -->
<div class="a" style="left:1007px;top:135px;width:17px;height:571px;background:linear-gradient(90deg,#dde1e8,#e3e7ed)"></div>
<div class="a" style="left:1011px;top:140px;width:9px;height:2px;background:#6d737b"></div>
<div class="a" style="left:1007px;top:144px;width:17px;height:17px;border:1px solid #7b848e;background:#dfe3e9"></div>
<svg style="left:1009px;top:146px" width="13" height="12" viewBox="0 0 13 12"><rect x="1" y="2.5" width="11" height="7" fill="#f0e2ea" stroke="#6d737b"/><rect x="3" y="0.5" width="3.5" height="3" fill="#fff" stroke="#6d737b" stroke-width="0.8"/><rect x="7" y="8.5" width="3.5" height="3" fill="#fff" stroke="#6d737b" stroke-width="0.8"/></svg>
<svg style="left:1010px;top:163px" width="11" height="13" viewBox="0 0 11 13"><path d="M2.5 7 V3 M4.7 7 V1.5 M7 7 V1.5 M9.2 7 V3" stroke="#7a8088" stroke-width="1.6" stroke-linecap="round"/><path d="M1 7 C1 11 3 12.5 5.5 12.5 C8.5 12.5 10 11 10 7z" fill="#e7ece6" stroke="#7a8088"/></svg>
<div class="a" style="left:1007px;top:178px;width:17px;height:1px;background:#c9ced6"></div>
<svg style="left:1011px;top:184px" width="10" height="6" viewBox="0 0 10 6"><path d="M0 5.5h9.5l-4.75-5z" fill="#444"/></svg>
<div class="a" style="left:1008px;top:542px;width:15px;height:25px;border:1px solid #8f969f;border-radius:2px;background:linear-gradient(90deg,#f7f8fa,#eef0f3)"></div>
<div class="a" style="left:1011px;top:550px;width:8px;height:1px;background:#7f858d"></div>
<div class="a" style="left:1011px;top:553px;width:8px;height:1px;background:#7f858d"></div>
<div class="a" style="left:1011px;top:556px;width:8px;height:1px;background:#7f858d"></div>
<div class="a" style="left:1011px;top:559px;width:8px;height:1px;background:#7f858d"></div>
<svg style="left:1011px;top:644px" width="10" height="6" viewBox="0 0 10 6"><path d="M0 0.5h9.5l-4.75 5z" fill="#444"/></svg>
<div class="a" style="left:1007px;top:654px;width:17px;height:1px;background:#c9ced6"></div>
<svg style="left:1012px;top:659px" width="8" height="8" viewBox="0 0 8 8"><path d="M0.5 4h7l-3.5-3.5z M0.5 7.5h7l-3.5-3.5z" fill="#444"/></svg>
<div class="a" style="left:1012px;top:675px;width:8px;height:8px;border-radius:50%;border:1px solid #777"></div>
<svg style="left:1012px;top:693px" width="8" height="8" viewBox="0 0 8 8"><path d="M0.5 0.5h7l-3.5 3.5z M0.5 4h7l-3.5 3.5z" fill="#444"/></svg>

<!-- ===== STATUS BAR ===== -->
<div class="a" style="left:0;top:706px;width:1024px;height:22px;background:linear-gradient(#f3f4f6,#e1e4e8 60%,#d9dce1);border-top:1px solid #b6bcc5"></div>
<div class="t" style="left:8px;top:712px;font-size:11.5px;color:#3e4146">Страница: 8 из 9</div>
<div class="a" style="left:106px;top:709px;width:1px;height:17px;background:#c3c8cf"></div>
<div class="t" style="left:115px;top:712px;font-size:11.5px;color:#3e4146;letter-spacing:-0.25px">Число слов: 1 240</div>
<div class="a" style="left:217px;top:709px;width:1px;height:17px;background:#c3c8cf"></div>
<svg style="left:224px;top:709px" width="18" height="15" viewBox="0 0 18 15"><path d="M1 9 L9 5 L17 9 L9 13z" fill="#e9eef6" stroke="#4a6aa0"/><path d="M1 9 v2 L9 15 L17 11 v-2" fill="none" stroke="#4a6aa0"/><path d="M9 1 L15 7 M15 1 L9 7" stroke="#e03030" stroke-width="1.8"/></svg>
<div class="t" style="left:258px;top:712px;font-size:11.5px;color:#3e4146">русский</div>
<div class="a" style="left:364px;top:709px;width:1px;height:17px;background:#c3c8cf"></div>
<div class="a" style="left:752px;top:709px;width:1px;height:17px;background:#c3c8cf"></div>
<div class="a" style="left:757px;top:708px;width:19px;height:18px;border:1px solid #e0b34c;border-radius:2px;background:linear-gradient(#fdeeb0,#fbd96f)"></div>
<svg style="left:761px;top:711px" width="12" height="12" viewBox="0 0 12 12"><rect x="0.5" y="0.5" width="11" height="11" fill="#fff" stroke="#555"/><path d="M2.5 3h7M2.5 5h7M2.5 7h7M2.5 9h7" stroke="#555"/></svg>
<svg style="left:783px;top:711px" width="13" height="12" viewBox="0 0 13 12"><path d="M0.5 1.5 h5 l1 1 l1-1 h5 v10 h-5 l-1-1 l-1 1 h-5z" fill="#fff" stroke="#555"/><path d="M6.5 2.5v8M2 4h3M2 6h3M2 8h3M8 4h3M8 6h3M8 8h3" stroke="#777" stroke-width="0.8"/></svg>
<svg style="left:800px;top:711px" width="14" height="13" viewBox="0 0 14 13"><rect x="0.5" y="0.5" width="10" height="10" fill="#fff" stroke="#555"/><path d="M2.5 3h6M2.5 5h6M2.5 7h4" stroke="#777"/><circle cx="10.5" cy="9.5" r="3" fill="#3a8fd0"/><path d="M9 9h3" stroke="#5c5" stroke-width="1.2"/></svg>
<svg style="left:817px;top:711px" width="13" height="12" viewBox="0 0 13 12"><path d="M1 1h5M4 3.5h8M4 6h8M1 8.5h5M4 11h8" stroke="#666"/><path d="M1 3.5h1M1 6h1M1 11h1" stroke="#666"/></svg>
<svg style="left:833px;top:711px" width="13" height="12" viewBox="0 0 13 12"><path d="M0.5 1h12M0.5 3.5h12M0.5 6h12M0.5 8.5h12M0.5 11h12" stroke="#555"/></svg>
<div class="t" style="left:859px;top:712px;font-size:11.5px;color:#3e4146">90%</div>
<div class="a" style="left:888px;top:709px;width:16px;height:16px;border-radius:50%;border:1px solid #7b8189;background:linear-gradient(#fff,#e9ebef)"></div>
<div class="a" style="left:892px;top:716px;width:8px;height:2px;background:#444"></div>
<div class="a" style="left:904px;top:717px;width:101px;height:1px;background:#a9aeb5"></div>
<div class="a" style="left:954px;top:714px;width:1px;height:7px;background:#a9aeb5"></div>
<svg style="left:943px;top:709px" width="12" height="15" viewBox="0 0 12 15"><path d="M0.5 0.5h11v9l-5.5 5l-5.5-5z" fill="#f5f6f8" stroke="#7b8189"/></svg>
<div class="a" style="left:1005px;top:709px;width:16px;height:16px;border-radius:50%;border:1px solid #7b8189;background:linear-gradient(#fff,#e9ebef)"></div>
<div class="a" style="left:1009px;top:716px;width:8px;height:2px;background:#444"></div>
<div class="a" style="left:1012px;top:713px;width:2px;height:8px;background:#444"></div>

<!-- ===== TASKBAR ===== -->
<div class="a" style="left:0;top:728px;width:1024px;height:40px;background:#0b0b0c"></div>
<svg style="left:16px;top:740px" width="17" height="16" viewBox="0 0 17 16" fill="#fff"><path d="M0 2.2 L6.8 1.2 V7.4 H0z M8 1 L17 0 V7.4 H8z M0 8.6 H6.8 V14.8 L0 13.8z M8 8.6 H17 V16 L8 15z"/></svg>
<svg style="left:64px;top:739px" width="22" height="19" viewBox="0 0 22 19"><path d="M0 2 h7 l2 2 h13 v15 h-22z" fill="#f7c948"/><rect x="0" y="6" width="22" height="13" fill="#fbd96a"/><rect x="6" y="10" width="10" height="6" fill="#2f8fe0"/><rect x="9" y="14" width="4" height="5" fill="#1f6fc0"/></svg>
<div class="a" style="left:55px;top:765px;width:40px;height:3px;background:#76b9ed"></div>
<svg style="left:112px;top:737px" width="23" height="23" viewBox="0 0 24 24"><circle cx="12" cy="12" r="11.5" fill="#db4437"/><path d="M12 12 L2 6.2 A11.5 11.5 0 0 0 8.5 23 z" fill="#0f9d58"/><path d="M12 12 L8.5 23 A11.5 11.5 0 0 0 23.5 12 L12 12z" fill="#ffcd40"/><path d="M12 12 L23.5 11.5 A11.5 11.5 0 0 0 21 5.5z" fill="#ffcd40"/><circle cx="12" cy="12" r="5.5" fill="#fff"/><circle cx="12" cy="12" r="4.3" fill="#4285f4"/></svg>
<div class="a" style="left:104px;top:765px;width:40px;height:3px;background:#76b9ed"></div>
<svg style="left:162px;top:736px" width="22" height="24" viewBox="0 0 22 24"><path d="M13 0 C4 3 1 10 3 16 C5 22 14 24 19 19 C22 15 21 10 18 8 C19 12 17 14 15 14 C17 10 15 6 12 5 C13 7 12 9 10 10 C10 6 11 3 13 0z" fill="#f39a2b"/><path d="M10 16 C9 13 12 11 14 12 C16 14 15 18 12 19 C10 19 9 17.5 10 16z" fill="#e85a1a"/></svg>
<div class="a" style="left:153px;top:765px;width:40px;height:3px;background:#76b9ed"></div>
<svg style="left:213px;top:737px" width="18" height="23" viewBox="0 0 18 23"><rect x="0" y="0" width="18" height="23" fill="#fff"/><rect x="2" y="2" width="14" height="5" fill="#111"/><g fill="#111"><rect x="2.5" y="9.5" width="2.5" height="2"/><rect x="6.5" y="9.5" width="2.5" height="2"/><rect x="10.5" y="9.5" width="2.5" height="2"/><rect x="14" y="9.5" width="2" height="2"/><rect x="2.5" y="13.5" width="2.5" height="2"/><rect x="6.5" y="13.5" width="2.5" height="2"/><rect x="10.5" y="13.5" width="2.5" height="2"/><rect x="14" y="13.5" width="2" height="2"/><rect x="2.5" y="17.5" width="2.5" height="2"/><rect x="6.5" y="17.5" width="2.5" height="2"/><rect x="10.5" y="17.5" width="2.5" height="2"/><rect x="14" y="17.5" width="2" height="2"/></g></svg>
<svg style="left:259px;top:736px" width="24" height="24" viewBox="0 0 24 24"><rect x="0.5" y="0.5" width="23" height="23" fill="#fff" stroke="#8a2a8a"/><text x="1.5" y="10" font-family="Liberation Serif" font-weight="bold" font-size="10" fill="#1f3fbf">A</text><text x="12" y="10" font-family="Liberation Serif" font-weight="bold" font-size="10" fill="#2a9a3a">B</text><text x="7" y="17" font-family="Liberation Serif" font-weight="bold" font-size="9" fill="#e02a2a">C</text><text x="3" y="22.5" font-family="Liberation Sans" font-weight="bold" font-size="7" fill="#111">.net</text></svg>
<div class="a" style="left:296px;top:728px;width:48px;height:40px;background:#3a3a3a"></div><div class="a" style="left:340px;top:728px;width:1px;height:40px;background:#2c2c2c"></div><svg style="left:308px;top:736px" width="23" height="22" viewBox="0 0 23 22"><path d="M3.5 0.5 h17.5 v21 h-20.5 v-18z" fill="#fff" stroke="#1f4f9f" stroke-width="1"/><path d="M4 1 h16.5 v10 C14 12 8 12 1 14 v-10z" fill="#dce8f8"/><path d="M3 3.5 h4 l1.6 7.5 l2-7.5 h2.6 l2 7.5 l1.6-7.5 h3.6 l-3.4 11.5 h-3.2 l-1.9-6.8 l-1.9 6.8 h-3.2z" fill="#1f5bc4"/><path d="M14 16 L21 12 v6z" fill="#eaf0f8"/><path d="M2 17 C8 15 14 15 20 17" stroke="#c9d6e8" fill="none"/></svg><div class="a" style="left:296px;top:765px;width:48px;height:3px;background:#76b9ed"></div>
<svg style="left:743px;top:743px" width="13" height="7" viewBox="0 0 13 7"><path d="M0.7 6.3 L6.5 0.7 L12.3 6.3" fill="none" stroke="#fff" stroke-width="1.3"/></svg>
<svg style="left:773px;top:741px" width="18" height="15" viewBox="0 0 18 15"><rect x="4.5" y="2.5" width="13" height="9" fill="none" stroke="#fff"/><path d="M11 11.5 v3 M7 14.5 h8" stroke="#fff"/><rect x="0.5" y="0.5" width="6" height="6" fill="#0b0b0c" stroke="#fff"/><path d="M1.5 2.5 h4M1.5 4.5h4" stroke="#fff" stroke-width="0.8"/></svg>
<svg style="left:805px;top:741px" width="18" height="15" viewBox="0 0 18 15"><path d="M0.5 5 h3 l4-4 v13 l-4-4 h-3z" fill="none" stroke="#fff"/><path d="M10 4.5 C11.5 6 11.5 9 10 10.5 M12.5 2.5 C15 5 15 10 12.5 12.5 M15 0.8 C18.5 4 18.5 11 15 14.2" fill="none" stroke="#fff"/></svg>
<svg style="left:841px;top:740px" width="17" height="17" viewBox="0 0 17 17"><path d="M5 13 L14 2 L16 4 L7 15z" fill="none" stroke="#fff"/><path d="M3 15 C1 13 2 10 5 9 M5 15 C4 17 1 17 1 14" fill="none" stroke="#fff"/></svg>
<div class="t" style="left:876px;top:741px;font-size:12.5px;color:#fff;transform:scaleX(0.9);transform-origin:0 0">РУС</div>
<div class="t" style="left:924px;top:733px;font-size:12px;color:#fff;transform:scaleX(0.88);transform-origin:0 0">13:08</div>
<div class="t" style="left:911px;top:750px;font-size:12px;color:#fff;transform:scaleX(0.88);transform-origin:0 0">19.03.2019</div>
<svg style="left:983px;top:740px" width="17" height="17" viewBox="0 0 17 17"><path d="M0.5 0.5 h15 v11 h-6 l-3 3 v-3 h-6z" fill="#fff"/><path d="M3 3.5h10M3 6h10M3 8.5h6" stroke="#0b0b0c" stroke-width="1.1"/><circle cx="13" cy="13" r="3.5" fill="#0b0b0c"/><circle cx="13" cy="13" r="2.5" fill="none" stroke="#fff"/></svg>

</body></html>
